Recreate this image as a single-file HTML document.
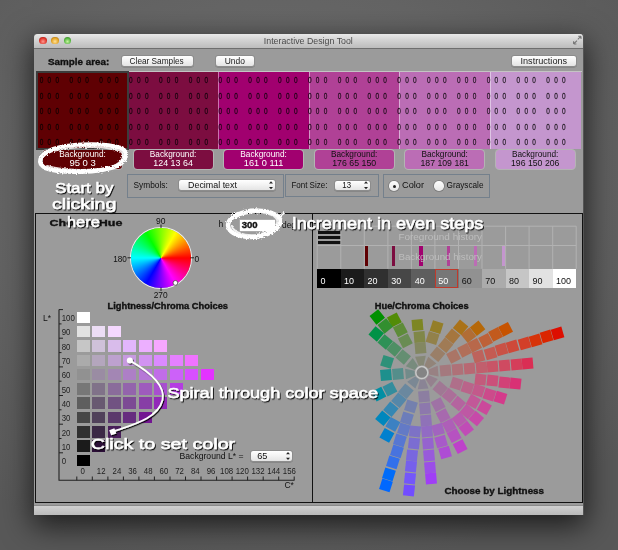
<!DOCTYPE html><html><head><meta charset="utf-8"><style>
*{margin:0;padding:0;box-sizing:border-box}
html,body{width:618px;height:550px;overflow:hidden}
body{position:relative;font-family:"Liberation Sans",sans-serif;background:#606060}
.a{position:absolute}
.btn{position:absolute;background:linear-gradient(#ffffff,#f2f2f2 50%,#e4e4e4);border:1px solid #8c8c8c;border-radius:3px;box-shadow:0 0.5px 0.5px rgba(0,0,0,0.25)}
.sq{position:absolute}
svg text{font-family:"Liberation Sans",sans-serif}
svg{will-change:transform}
</style></head><body>

<div class="a" style="left:0;top:0;width:618px;height:550px;background:radial-gradient(ellipse 75% 70% at 45% 35%,#6e6e6e 0%,#646464 55%,#585858 100%)"></div>
<div class="a" style="left:34px;top:34px;width:550px;height:481px;box-shadow:0 9px 28px 2px rgba(0,0,0,0.68)"></div>
<div class="a" style="left:34px;top:34px;width:550px;height:481px;background:#9b9b9b;border-radius:4px 4px 0 0;overflow:hidden;border-right:1px solid #555">
<div class="a" style="left:0;top:0;width:550px;height:15px;background:linear-gradient(#e8e8e8,#d0d0d0 50%,#bcbcbc);border-bottom:1px solid #6e6e6e"></div>
<div class="a" style="left:5.00px;top:2.5px;width:7.6px;height:7.6px;border-radius:50%;background:radial-gradient(circle at 50% 65%,#ff9a90 0%,#e0382e 55%,#8a1a14 100%)"></div>
<div class="a" style="left:17.45px;top:2.5px;width:7.6px;height:7.6px;border-radius:50%;background:radial-gradient(circle at 50% 65%,#ffe29a 0%,#e5a526 55%,#8a5a10 100%)"></div>
<div class="a" style="left:29.90px;top:2.5px;width:7.6px;height:7.6px;border-radius:50%;background:radial-gradient(circle at 50% 65%,#c8f5a0 0%,#58b842 55%,#2a6a1c 100%)"></div>
<div class="a" style="left:0;top:471px;width:550px;height:10px;background:linear-gradient(#d0d0d0,#bababa);border-top:1px solid #8a8a8a"></div>
</div>
<div class="btn" style="left:120.5px;top:55px;width:73.5px;height:12px"></div>
<div class="btn" style="left:214.5px;top:55px;width:40px;height:12px"></div>
<div class="btn" style="left:511px;top:55px;width:66px;height:12px"></div>
<div class="a" style="left:37px;top:70.6px;width:545px;height:1.2px;background:#c4c4c4"></div>
<div class="a" style="left:37.5px;top:71.8px;width:90.0px;height:76.8px;background:rgb(95, 0, 3)"></div>
<div class="a" style="left:127.5px;top:71.8px;width:90.5px;height:76.8px;background:rgb(124, 13, 64)"></div>
<div class="a" style="left:127.5px;top:71.8px;width:0.8px;height:76.8px;background:rgba(255,255,255,.45)"></div>
<div class="a" style="left:218px;top:71.8px;width:90.60000000000002px;height:76.8px;background:rgb(161, 0, 111)"></div>
<div class="a" style="left:218px;top:71.8px;width:0.8px;height:76.8px;background:rgba(255,255,255,.45)"></div>
<div class="a" style="left:308.6px;top:71.8px;width:90.39999999999998px;height:76.8px;background:rgb(176, 65, 150)"></div>
<div class="a" style="left:308.6px;top:71.8px;width:0.8px;height:76.8px;background:rgba(255,255,255,.45)"></div>
<div class="a" style="left:399px;top:71.8px;width:90.60000000000002px;height:76.8px;background:rgb(187, 109, 181)"></div>
<div class="a" style="left:399px;top:71.8px;width:0.8px;height:76.8px;background:rgba(255,255,255,.45)"></div>
<div class="a" style="left:489.6px;top:71.8px;width:91.60000000000002px;height:76.8px;background:rgb(196, 150, 206)"></div>
<div class="a" style="left:489.6px;top:71.8px;width:0.8px;height:76.8px;background:rgba(255,255,255,.45)"></div>
<div class="a" style="left:36px;top:70.5px;width:92.5px;height:79.2px;border:2px solid #3c3c3c"></div>
<div class="a" style="left:43.1px;top:149.8px;width:79.1px;height:19.2px;background:rgb(95, 0, 3);border-radius:3.5px;box-shadow:0 0 0 1px rgba(200,200,200,.55)"></div>
<div class="a" style="left:133.6px;top:149.8px;width:79.1px;height:19.2px;background:rgb(124, 13, 64);border-radius:3.5px;box-shadow:0 0 0 1px rgba(200,200,200,.55)"></div>
<div class="a" style="left:224.1px;top:149.8px;width:79.1px;height:19.2px;background:rgb(161, 0, 111);border-radius:3.5px;box-shadow:0 0 0 1px rgba(200,200,200,.55)"></div>
<div class="a" style="left:314.6px;top:149.8px;width:79.10000000000002px;height:19.2px;background:rgb(176, 65, 150);border-radius:3.5px;box-shadow:0 0 0 1px rgba(200,200,200,.55)"></div>
<div class="a" style="left:405.1px;top:149.8px;width:79.10000000000002px;height:19.2px;background:rgb(187, 109, 181);border-radius:3.5px;box-shadow:0 0 0 1px rgba(200,200,200,.55)"></div>
<div class="a" style="left:495.6px;top:149.8px;width:79.10000000000002px;height:19.2px;background:rgb(196, 150, 206);border-radius:3.5px;box-shadow:0 0 0 1px rgba(200,200,200,.55)"></div>
<div class="a" style="left:127px;top:173.5px;width:156.5px;height:24px;border:1px solid #74808c"></div>
<div class="btn" style="left:177.6px;top:179px;width:98px;height:12.4px"></div>
<div class="a" style="left:285.3px;top:174.3px;width:93.3px;height:22.5px;border:1px solid #74808c"></div>
<div class="btn" style="left:334px;top:179.6px;width:36.7px;height:11.8px"></div>
<div class="a" style="left:382.5px;top:174.3px;width:107.5px;height:23.5px;border:1px solid #74808c"></div>
<div class="a" style="left:389.4px;top:181.4px;width:9.6px;height:9.6px;border-radius:50%;background:linear-gradient(#fdfdfd,#e6e6e6);box-shadow:0 0 0 0.8px #7a7a7a"></div><div class="a" style="left:392.7px;top:184.7px;width:3px;height:3px;border-radius:50%;background:#222"></div>
<div class="a" style="left:434.1px;top:181.4px;width:9.6px;height:9.6px;border-radius:50%;background:linear-gradient(#fdfdfd,#e6e6e6);box-shadow:0 0 0 0.8px #7a7a7a"></div>
<div class="a" style="left:35px;top:212.5px;width:548px;height:290px;border:1.5px solid #111"></div>
<div class="a" style="left:311.5px;top:213px;width:1.5px;height:289px;background:#111"></div>
<div class="a" style="left:131.2px;top:228px;width:59.5px;height:59.5px;border-radius:50%;background:conic-gradient(from 90deg,#f00,#f0f,#00f,#0ff,#0f0,#ff0,#f00);box-shadow:0 0 0 1px #f0f0f0"></div>
<div class="a" style="left:239.8px;top:219.5px;width:35px;height:11px;background:#fff;box-shadow:0 0 0 1px #aaa"></div>
<div class="sq" style="left:76.5px;top:454.7px;width:13.2px;height:11.5px;background:rgb(0, 0, 0)"></div>
<div class="sq" style="left:76.5px;top:440.4px;width:13.2px;height:11.5px;background:rgb(27, 27, 27)"></div>
<div class="sq" style="left:92.0px;top:440.4px;width:13.2px;height:11.5px;background:rgb(43, 15, 55)"></div>
<div class="sq" style="left:76.5px;top:426.1px;width:13.2px;height:11.5px;background:rgb(48, 48, 48)"></div>
<div class="sq" style="left:92.0px;top:426.1px;width:13.2px;height:11.5px;background:rgb(59, 41, 69)"></div>
<div class="sq" style="left:107.5px;top:426.1px;width:13.2px;height:11.5px;background:rgb(72, 29, 89)"></div>
<div class="sq" style="left:76.5px;top:411.7px;width:13.2px;height:11.5px;background:rgb(71, 71, 71)"></div>
<div class="sq" style="left:92.0px;top:411.7px;width:13.2px;height:11.5px;background:rgb(80, 65, 90)"></div>
<div class="sq" style="left:107.5px;top:411.7px;width:13.2px;height:11.5px;background:rgb(91, 57, 108)"></div>
<div class="sq" style="left:123.0px;top:411.7px;width:13.2px;height:11.5px;background:rgb(102, 45, 127)"></div>
<div class="sq" style="left:138.5px;top:411.7px;width:13.2px;height:11.5px;background:rgb(115, 21, 146)"></div>
<div class="sq" style="left:76.5px;top:397.4px;width:13.2px;height:11.5px;background:rgb(94, 94, 94)"></div>
<div class="sq" style="left:92.0px;top:397.4px;width:13.2px;height:11.5px;background:rgb(104, 89, 113)"></div>
<div class="sq" style="left:107.5px;top:397.4px;width:13.2px;height:11.5px;background:rgb(113, 82, 130)"></div>
<div class="sq" style="left:123.0px;top:397.4px;width:13.2px;height:11.5px;background:rgb(124, 74, 148)"></div>
<div class="sq" style="left:138.5px;top:397.4px;width:13.2px;height:11.5px;background:rgb(135, 62, 166)"></div>
<div class="sq" style="left:154.0px;top:397.4px;width:13.2px;height:11.5px;background:rgb(146, 41, 184)"></div>
<div class="sq" style="left:76.5px;top:383.1px;width:13.2px;height:11.5px;background:rgb(119, 119, 119)"></div>
<div class="sq" style="left:92.0px;top:383.1px;width:13.2px;height:11.5px;background:rgb(128, 114, 137)"></div>
<div class="sq" style="left:107.5px;top:383.1px;width:13.2px;height:11.5px;background:rgb(138, 108, 155)"></div>
<div class="sq" style="left:123.0px;top:383.1px;width:13.2px;height:11.5px;background:rgb(147, 100, 172)"></div>
<div class="sq" style="left:138.5px;top:383.1px;width:13.2px;height:11.5px;background:rgb(158, 91, 189)"></div>
<div class="sq" style="left:154.0px;top:383.1px;width:13.2px;height:11.5px;background:rgb(168, 79, 207)"></div>
<div class="sq" style="left:169.5px;top:383.1px;width:13.2px;height:11.5px;background:rgb(180, 60, 225)"></div>
<div class="sq" style="left:76.5px;top:368.8px;width:13.2px;height:11.5px;background:rgb(145, 145, 145)"></div>
<div class="sq" style="left:92.0px;top:368.8px;width:13.2px;height:11.5px;background:rgb(154, 140, 163)"></div>
<div class="sq" style="left:107.5px;top:368.8px;width:13.2px;height:11.5px;background:rgb(163, 134, 180)"></div>
<div class="sq" style="left:123.0px;top:368.8px;width:13.2px;height:11.5px;background:rgb(173, 127, 198)"></div>
<div class="sq" style="left:138.5px;top:368.8px;width:13.2px;height:11.5px;background:rgb(182, 119, 215)"></div>
<div class="sq" style="left:154.0px;top:368.8px;width:13.2px;height:11.5px;background:rgb(193, 109, 232)"></div>
<div class="sq" style="left:169.5px;top:368.8px;width:13.2px;height:11.5px;background:rgb(204, 97, 249)"></div>
<div class="sq" style="left:185.0px;top:368.8px;width:13.2px;height:11.5px;background:rgb(215, 79, 255)"></div>
<div class="sq" style="left:200.5px;top:368.8px;width:13.2px;height:11.5px;background:rgb(227, 51, 255)"></div>
<div class="sq" style="left:76.5px;top:354.5px;width:13.2px;height:11.5px;background:rgb(171, 171, 171)"></div>
<div class="sq" style="left:92.0px;top:354.5px;width:13.2px;height:11.5px;background:rgb(180, 166, 189)"></div>
<div class="sq" style="left:107.5px;top:354.5px;width:13.2px;height:11.5px;background:rgb(189, 161, 207)"></div>
<div class="sq" style="left:123.0px;top:354.5px;width:13.2px;height:11.5px;background:rgb(199, 154, 224)"></div>
<div class="sq" style="left:138.5px;top:354.5px;width:13.2px;height:11.5px;background:rgb(209, 147, 241)"></div>
<div class="sq" style="left:154.0px;top:354.5px;width:13.2px;height:11.5px;background:rgb(219, 138, 255)"></div>
<div class="sq" style="left:169.5px;top:354.5px;width:13.2px;height:11.5px;background:rgb(229, 128, 255)"></div>
<div class="sq" style="left:185.0px;top:354.5px;width:13.2px;height:11.5px;background:rgb(240, 115, 255)"></div>
<div class="sq" style="left:76.5px;top:340.1px;width:13.2px;height:11.5px;background:rgb(198, 198, 198)"></div>
<div class="sq" style="left:92.0px;top:340.1px;width:13.2px;height:11.5px;background:rgb(207, 193, 217)"></div>
<div class="sq" style="left:107.5px;top:340.1px;width:13.2px;height:11.5px;background:rgb(217, 188, 235)"></div>
<div class="sq" style="left:123.0px;top:340.1px;width:13.2px;height:11.5px;background:rgb(226, 182, 252)"></div>
<div class="sq" style="left:138.5px;top:340.1px;width:13.2px;height:11.5px;background:rgb(236, 175, 255)"></div>
<div class="sq" style="left:154.0px;top:340.1px;width:13.2px;height:11.5px;background:rgb(246, 167, 255)"></div>
<div class="sq" style="left:76.5px;top:325.8px;width:13.2px;height:11.5px;background:rgb(226, 226, 226)"></div>
<div class="sq" style="left:92.0px;top:325.8px;width:13.2px;height:11.5px;background:rgb(236, 221, 245)"></div>
<div class="sq" style="left:107.5px;top:325.8px;width:13.2px;height:11.5px;background:rgb(245, 216, 255)"></div>
<div class="sq" style="left:76.5px;top:311.5px;width:13.2px;height:11.5px;background:rgb(255, 255, 255)"></div>
<div class="btn" style="left:249.7px;top:450.2px;width:43.3px;height:11.8px"></div>
<div class="a" style="left:317.5px;top:231px;width:23.5px;height:3px;background:#111"></div>
<div class="a" style="left:317.5px;top:236px;width:23.5px;height:3px;background:#111"></div>
<div class="a" style="left:317.5px;top:241px;width:23.5px;height:3px;background:#111"></div>
<div class="a" style="left:364.6px;top:246px;width:3.2px;height:19.5px;background:rgb(95, 0, 3)"></div>
<div class="a" style="left:392.0px;top:246px;width:3.2px;height:19.5px;background:rgb(124, 13, 64)"></div>
<div class="a" style="left:419.4px;top:246px;width:3.2px;height:19.5px;background:rgb(161, 0, 111)"></div>
<div class="a" style="left:446.8px;top:246px;width:3.2px;height:19.5px;background:rgb(176, 65, 150)"></div>
<div class="a" style="left:474.2px;top:246px;width:3.2px;height:19.5px;background:rgb(187, 109, 181)"></div>
<div class="a" style="left:501.6px;top:246px;width:3.2px;height:19.5px;background:rgb(196, 150, 206)"></div>
<div class="a" style="left:317.2px;top:268.8px;width:23.75px;height:19px;background:rgb(0,0,0)"></div>
<div class="a" style="left:340.8px;top:268.8px;width:23.75px;height:19px;background:rgb(27,27,27)"></div>
<div class="a" style="left:364.3px;top:268.8px;width:23.75px;height:19px;background:rgb(48,48,48)"></div>
<div class="a" style="left:387.9px;top:268.8px;width:23.75px;height:19px;background:rgb(71,71,71)"></div>
<div class="a" style="left:411.4px;top:268.8px;width:23.75px;height:19px;background:rgb(94,94,94)"></div>
<div class="a" style="left:434.9px;top:268.8px;width:23.75px;height:19px;background:rgb(119,119,119)"></div>
<div class="a" style="left:458.5px;top:268.8px;width:23.75px;height:19px;background:rgb(145,145,145)"></div>
<div class="a" style="left:482.0px;top:268.8px;width:23.75px;height:19px;background:rgb(171,171,171)"></div>
<div class="a" style="left:505.6px;top:268.8px;width:23.75px;height:19px;background:rgb(198,198,198)"></div>
<div class="a" style="left:529.1px;top:268.8px;width:23.75px;height:19px;background:rgb(226,226,226)"></div>
<div class="a" style="left:552.7px;top:268.8px;width:23.75px;height:19px;background:rgb(255,255,255)"></div>
<div class="a" style="left:434.9px;top:268.8px;width:23.6px;height:19px;border:1px solid #c0392b"></div>
<div class="sq" style="left:440.46px;top:365.30px;width:10.5px;height:10.5px;background:rgb(164, 121, 126);transform:rotate(-4.90deg)"></div>
<div class="sq" style="left:452.17px;top:364.30px;width:10.5px;height:10.5px;background:rgb(175, 113, 120);transform:rotate(-4.90deg)"></div>
<div class="sq" style="left:463.88px;top:363.29px;width:10.5px;height:10.5px;background:rgb(184, 104, 115);transform:rotate(-4.90deg)"></div>
<div class="sq" style="left:475.58px;top:362.29px;width:10.5px;height:10.5px;background:rgb(193, 95, 109);transform:rotate(-4.90deg)"></div>
<div class="sq" style="left:487.29px;top:361.29px;width:10.5px;height:10.5px;background:rgb(200, 85, 103);transform:rotate(-4.90deg)"></div>
<div class="sq" style="left:499.00px;top:360.28px;width:10.5px;height:10.5px;background:rgb(207, 74, 97);transform:rotate(-4.90deg)"></div>
<div class="sq" style="left:510.70px;top:359.28px;width:10.5px;height:10.5px;background:rgb(213, 62, 90);transform:rotate(-4.90deg)"></div>
<div class="sq" style="left:522.41px;top:358.27px;width:10.5px;height:10.5px;background:rgb(218, 46, 84);transform:rotate(-4.90deg)"></div>
<div class="sq" style="left:473.46px;top:350.87px;width:10.5px;height:10.5px;background:rgb(189, 99, 92);transform:rotate(-16.15deg)"></div>
<div class="sq" style="left:484.75px;top:347.60px;width:10.5px;height:10.5px;background:rgb(196, 91, 82);transform:rotate(-16.15deg)"></div>
<div class="sq" style="left:496.03px;top:344.33px;width:10.5px;height:10.5px;background:rgb(201, 82, 70);transform:rotate(-16.15deg)"></div>
<div class="sq" style="left:507.32px;top:341.06px;width:10.5px;height:10.5px;background:rgb(206, 73, 57);transform:rotate(-16.15deg)"></div>
<div class="sq" style="left:518.61px;top:337.80px;width:10.5px;height:10.5px;background:rgb(211, 63, 40);transform:rotate(-16.15deg)"></div>
<div class="sq" style="left:529.89px;top:334.53px;width:10.5px;height:10.5px;background:rgb(215, 51, 9);transform:rotate(-16.15deg)"></div>
<div class="sq" style="left:541.18px;top:331.26px;width:10.5px;height:10.5px;background:rgb(218, 37, 0);transform:rotate(-16.15deg)"></div>
<div class="sq" style="left:552.47px;top:327.99px;width:10.5px;height:10.5px;background:rgb(221, 14, 0);transform:rotate(-16.15deg)"></div>
<div class="sq" style="left:448.29px;top:350.90px;width:10.5px;height:10.5px;background:rgb(170, 117, 102);transform:rotate(-27.40deg)"></div>
<div class="sq" style="left:458.72px;top:345.49px;width:10.5px;height:10.5px;background:rgb(177, 111, 89);transform:rotate(-27.40deg)"></div>
<div class="sq" style="left:469.15px;top:340.08px;width:10.5px;height:10.5px;background:rgb(184, 104, 74);transform:rotate(-27.40deg)"></div>
<div class="sq" style="left:479.58px;top:334.68px;width:10.5px;height:10.5px;background:rgb(190, 97, 56);transform:rotate(-27.40deg)"></div>
<div class="sq" style="left:490.02px;top:329.27px;width:10.5px;height:10.5px;background:rgb(194, 90, 29);transform:rotate(-27.40deg)"></div>
<div class="sq" style="left:500.45px;top:323.86px;width:10.5px;height:10.5px;background:rgb(199, 83, 0);transform:rotate(-27.40deg)"></div>
<div class="sq" style="left:462.82px;top:330.34px;width:10.5px;height:10.5px;background:rgb(177, 109, 53);transform:rotate(-38.65deg)"></div>
<div class="sq" style="left:472.00px;top:323.01px;width:10.5px;height:10.5px;background:rgb(182, 104, 8);transform:rotate(-38.65deg)"></div>
<div class="sq" style="left:432.01px;top:348.99px;width:10.5px;height:10.5px;background:rgb(154, 127, 104);transform:rotate(-49.90deg)"></div>
<div class="sq" style="left:439.58px;top:340.00px;width:10.5px;height:10.5px;background:rgb(160, 123, 85);transform:rotate(-49.90deg)"></div>
<div class="sq" style="left:447.15px;top:331.02px;width:10.5px;height:10.5px;background:rgb(165, 118, 62);transform:rotate(-49.90deg)"></div>
<div class="sq" style="left:454.71px;top:322.03px;width:10.5px;height:10.5px;background:rgb(170, 114, 24);transform:rotate(-49.90deg)"></div>
<div class="sq" style="left:427.36px;top:333.27px;width:10.5px;height:10.5px;background:rgb(146, 129, 74);transform:rotate(-72.40deg)"></div>
<div class="sq" style="left:430.91px;top:322.07px;width:10.5px;height:10.5px;background:rgb(148, 126, 39);transform:rotate(-72.40deg)"></div>
<div class="sq" style="left:414.50px;top:343.44px;width:10.5px;height:10.5px;background:rgb(131, 135, 97);transform:rotate(-94.90deg)"></div>
<div class="sq" style="left:413.50px;top:331.73px;width:10.5px;height:10.5px;background:rgb(128, 135, 72);transform:rotate(-94.90deg)"></div>
<div class="sq" style="left:412.49px;top:320.02px;width:10.5px;height:10.5px;background:rgb(125, 134, 35);transform:rotate(-94.90deg)"></div>
<div class="sq" style="left:400.10px;top:335.61px;width:10.5px;height:10.5px;background:rgb(105, 140, 83);transform:rotate(-117.40deg)"></div>
<div class="sq" style="left:394.69px;top:325.18px;width:10.5px;height:10.5px;background:rgb(94, 140, 57);transform:rotate(-117.40deg)"></div>
<div class="sq" style="left:389.28px;top:314.75px;width:10.5px;height:10.5px;background:rgb(82, 140, 7);transform:rotate(-117.40deg)"></div>
<div class="sq" style="left:379.54px;top:321.08px;width:10.5px;height:10.5px;background:rgb(50, 143, 47);transform:rotate(-128.65deg)"></div>
<div class="sq" style="left:372.21px;top:311.90px;width:10.5px;height:10.5px;background:rgb(1, 144, 0);transform:rotate(-128.65deg)"></div>
<div class="sq" style="left:398.19px;top:351.89px;width:10.5px;height:10.5px;background:rgb(100, 142, 113);transform:rotate(-139.90deg)"></div>
<div class="sq" style="left:389.20px;top:344.32px;width:10.5px;height:10.5px;background:rgb(78, 143, 100);transform:rotate(-139.90deg)"></div>
<div class="sq" style="left:380.22px;top:336.75px;width:10.5px;height:10.5px;background:rgb(46, 145, 86);transform:rotate(-139.90deg)"></div>
<div class="sq" style="left:371.23px;top:329.19px;width:10.5px;height:10.5px;background:rgb(0, 146, 71);transform:rotate(-139.90deg)"></div>
<div class="sq" style="left:382.47px;top:356.54px;width:10.5px;height:10.5px;background:rgb(47, 145, 121);transform:rotate(-162.40deg)"></div>
<div class="sq" style="left:392.64px;top:369.40px;width:10.5px;height:10.5px;background:rgb(84, 142, 139);transform:rotate(-184.90deg)"></div>
<div class="sq" style="left:380.93px;top:370.40px;width:10.5px;height:10.5px;background:rgb(29, 144, 141);transform:rotate(-184.90deg)"></div>
<div class="sq" style="left:384.81px;top:383.80px;width:10.5px;height:10.5px;background:rgb(51, 141, 157);transform:rotate(-207.40deg)"></div>
<div class="sq" style="left:374.38px;top:389.21px;width:10.5px;height:10.5px;background:rgb(0, 143, 164);transform:rotate(-207.40deg)"></div>
<div class="sq" style="left:401.09px;top:385.71px;width:10.5px;height:10.5px;background:rgb(106, 136, 159);transform:rotate(-229.90deg)"></div>
<div class="sq" style="left:393.52px;top:394.70px;width:10.5px;height:10.5px;background:rgb(85, 135, 169);transform:rotate(-229.90deg)"></div>
<div class="sq" style="left:385.95px;top:403.68px;width:10.5px;height:10.5px;background:rgb(53, 135, 179);transform:rotate(-229.90deg)"></div>
<div class="sq" style="left:378.39px;top:412.67px;width:10.5px;height:10.5px;background:rgb(0, 135, 189);transform:rotate(-229.90deg)"></div>
<div class="sq" style="left:387.96px;top:419.25px;width:10.5px;height:10.5px;background:rgb(60, 129, 194);transform:rotate(-241.15deg)"></div>
<div class="sq" style="left:382.29px;top:429.54px;width:10.5px;height:10.5px;background:rgb(0, 128, 206);transform:rotate(-241.15deg)"></div>
<div class="sq" style="left:405.74px;top:401.43px;width:10.5px;height:10.5px;background:rgb(116, 128, 174);transform:rotate(-252.40deg)"></div>
<div class="sq" style="left:402.19px;top:412.63px;width:10.5px;height:10.5px;background:rgb(108, 125, 186);transform:rotate(-252.40deg)"></div>
<div class="sq" style="left:398.63px;top:423.83px;width:10.5px;height:10.5px;background:rgb(99, 122, 198);transform:rotate(-252.40deg)"></div>
<div class="sq" style="left:395.08px;top:435.03px;width:10.5px;height:10.5px;background:rgb(87, 119, 210);transform:rotate(-252.40deg)"></div>
<div class="sq" style="left:391.53px;top:446.23px;width:10.5px;height:10.5px;background:rgb(72, 115, 222);transform:rotate(-252.40deg)"></div>
<div class="sq" style="left:387.98px;top:457.43px;width:10.5px;height:10.5px;background:rgb(50, 112, 235);transform:rotate(-252.40deg)"></div>
<div class="sq" style="left:384.42px;top:468.63px;width:10.5px;height:10.5px;background:rgb(0, 108, 249);transform:rotate(-252.40deg)"></div>
<div class="sq" style="left:380.87px;top:479.83px;width:10.5px;height:10.5px;background:rgb(0, 104, 255);transform:rotate(-252.40deg)"></div>
<div class="sq" style="left:410.00px;top:426.24px;width:10.5px;height:10.5px;background:rgb(125, 114, 198);transform:rotate(-263.65deg)"></div>
<div class="sq" style="left:408.70px;top:437.91px;width:10.5px;height:10.5px;background:rgb(123, 109, 210);transform:rotate(-263.65deg)"></div>
<div class="sq" style="left:407.40px;top:449.59px;width:10.5px;height:10.5px;background:rgb(121, 103, 223);transform:rotate(-263.65deg)"></div>
<div class="sq" style="left:406.10px;top:461.27px;width:10.5px;height:10.5px;background:rgb(118, 96, 236);transform:rotate(-263.65deg)"></div>
<div class="sq" style="left:404.80px;top:472.95px;width:10.5px;height:10.5px;background:rgb(116, 87, 250);transform:rotate(-263.65deg)"></div>
<div class="sq" style="left:403.50px;top:484.63px;width:10.5px;height:10.5px;background:rgb(114, 77, 255);transform:rotate(-263.65deg)"></div>
<div class="sq" style="left:418.60px;top:391.26px;width:10.5px;height:10.5px;background:rgb(140, 126, 161);transform:rotate(-274.90deg)"></div>
<div class="sq" style="left:419.60px;top:402.97px;width:10.5px;height:10.5px;background:rgb(141, 120, 173);transform:rotate(-274.90deg)"></div>
<div class="sq" style="left:420.61px;top:414.68px;width:10.5px;height:10.5px;background:rgb(143, 114, 184);transform:rotate(-274.90deg)"></div>
<div class="sq" style="left:421.61px;top:426.38px;width:10.5px;height:10.5px;background:rgb(146, 107, 196);transform:rotate(-274.90deg)"></div>
<div class="sq" style="left:422.61px;top:438.09px;width:10.5px;height:10.5px;background:rgb(149, 99, 207);transform:rotate(-274.90deg)"></div>
<div class="sq" style="left:423.62px;top:449.80px;width:10.5px;height:10.5px;background:rgb(152, 90, 219);transform:rotate(-274.90deg)"></div>
<div class="sq" style="left:424.62px;top:461.50px;width:10.5px;height:10.5px;background:rgb(155, 78, 232);transform:rotate(-274.90deg)"></div>
<div class="sq" style="left:425.63px;top:473.21px;width:10.5px;height:10.5px;background:rgb(160, 62, 246);transform:rotate(-274.90deg)"></div>
<div class="sq" style="left:433.03px;top:424.26px;width:10.5px;height:10.5px;background:rgb(162, 100, 191);transform:rotate(-286.15deg)"></div>
<div class="sq" style="left:436.30px;top:435.55px;width:10.5px;height:10.5px;background:rgb(168, 90, 201);transform:rotate(-286.15deg)"></div>
<div class="sq" style="left:439.57px;top:446.83px;width:10.5px;height:10.5px;background:rgb(174, 76, 212);transform:rotate(-286.15deg)"></div>
<div class="sq" style="left:433.00px;top:399.09px;width:10.5px;height:10.5px;background:rgb(159, 114, 165);transform:rotate(-297.40deg)"></div>
<div class="sq" style="left:438.41px;top:409.52px;width:10.5px;height:10.5px;background:rgb(167, 105, 174);transform:rotate(-297.40deg)"></div>
<div class="sq" style="left:443.82px;top:419.95px;width:10.5px;height:10.5px;background:rgb(174, 95, 184);transform:rotate(-297.40deg)"></div>
<div class="sq" style="left:449.22px;top:430.38px;width:10.5px;height:10.5px;background:rgb(182, 82, 193);transform:rotate(-297.40deg)"></div>
<div class="sq" style="left:454.63px;top:440.82px;width:10.5px;height:10.5px;background:rgb(190, 65, 202);transform:rotate(-297.40deg)"></div>
<div class="sq" style="left:453.56px;top:413.62px;width:10.5px;height:10.5px;background:rgb(184, 90, 175);transform:rotate(-308.65deg)"></div>
<div class="sq" style="left:460.89px;top:422.80px;width:10.5px;height:10.5px;background:rgb(192, 76, 182);transform:rotate(-308.65deg)"></div>
<div class="sq" style="left:434.91px;top:382.81px;width:10.5px;height:10.5px;background:rgb(160, 120, 148);transform:rotate(-319.90deg)"></div>
<div class="sq" style="left:443.90px;top:390.38px;width:10.5px;height:10.5px;background:rgb(171, 111, 153);transform:rotate(-319.90deg)"></div>
<div class="sq" style="left:452.88px;top:397.95px;width:10.5px;height:10.5px;background:rgb(180, 100, 159);transform:rotate(-319.90deg)"></div>
<div class="sq" style="left:461.87px;top:405.51px;width:10.5px;height:10.5px;background:rgb(190, 88, 164);transform:rotate(-319.90deg)"></div>
<div class="sq" style="left:470.86px;top:413.08px;width:10.5px;height:10.5px;background:rgb(199, 73, 169);transform:rotate(-319.90deg)"></div>
<div class="sq" style="left:468.45px;top:395.94px;width:10.5px;height:10.5px;background:rgb(194, 88, 152);transform:rotate(-331.15deg)"></div>
<div class="sq" style="left:478.74px;top:401.61px;width:10.5px;height:10.5px;background:rgb(203, 73, 155);transform:rotate(-331.15deg)"></div>
<div class="sq" style="left:450.63px;top:378.16px;width:10.5px;height:10.5px;background:rgb(175, 111, 138);transform:rotate(-342.40deg)"></div>
<div class="sq" style="left:461.83px;top:381.71px;width:10.5px;height:10.5px;background:rgb(186, 100, 138);transform:rotate(-342.40deg)"></div>
<div class="sq" style="left:473.03px;top:385.27px;width:10.5px;height:10.5px;background:rgb(195, 89, 139);transform:rotate(-342.40deg)"></div>
<div class="sq" style="left:484.23px;top:388.82px;width:10.5px;height:10.5px;background:rgb(204, 75, 139);transform:rotate(-342.40deg)"></div>
<div class="sq" style="left:495.43px;top:392.37px;width:10.5px;height:10.5px;background:rgb(212, 59, 139);transform:rotate(-342.40deg)"></div>
<div class="sq" style="left:475.44px;top:373.90px;width:10.5px;height:10.5px;background:rgb(195, 91, 124);transform:rotate(-353.65deg)"></div>
<div class="sq" style="left:487.11px;top:375.20px;width:10.5px;height:10.5px;background:rgb(203, 80, 122);transform:rotate(-353.65deg)"></div>
<div class="sq" style="left:498.79px;top:376.50px;width:10.5px;height:10.5px;background:rgb(210, 66, 119);transform:rotate(-353.65deg)"></div>
<div class="sq" style="left:510.47px;top:377.80px;width:10.5px;height:10.5px;background:rgb(217, 49, 117);transform:rotate(-353.65deg)"></div>
<svg class="a" style="left:0;top:0" width="618" height="550" viewBox="0 0 618 550"><polygon points="425.65,379.16 430.85,387.22 437.75,379.03 428.91,375.27" fill="rgb(149, 129, 142)"/>
<polygon points="419.88,379.95 417.86,389.34 428.53,388.43 424.94,379.52" fill="rgb(138, 132, 149)"/>
<polygon points="415.24,376.45 407.18,381.65 415.37,388.55 419.13,379.71" fill="rgb(123, 136, 148)"/>
<polygon points="414.45,370.68 405.06,368.66 405.97,379.33 414.88,375.74" fill="rgb(114, 139, 138)"/>
<polygon points="417.95,366.04 412.75,357.98 405.85,366.17 414.69,369.93" fill="rgb(120, 139, 125)"/>
<polygon points="423.72,365.25 425.74,355.86 415.07,356.77 418.66,365.68" fill="rgb(134, 136, 118)"/>
<polygon points="428.36,368.75 436.42,363.55 428.23,356.65 424.47,365.49" fill="rgb(146, 132, 121)"/>
<polygon points="429.15,374.52 438.54,376.54 437.63,365.87 428.72,369.46" fill="rgb(152, 129, 131)"/>
<path d="M573.6,44 L577,40.6 M573.6,44 V41.2 M573.6,44 H576.4 M581,36.2 L577.8,39.4 M581,36.2 V39 M581,36.2 H578.2" stroke="#777" stroke-width="1.1" fill="none"/>
<text x="263.8" y="44.3" font-size="9.5" fill="#4a4a4a" textLength="89.0" lengthAdjust="spacingAndGlyphs">Interactive Design Tool</text>
<text x="48.0" y="64.6" font-size="9.9" font-weight="bold" stroke="#111" stroke-width="0.35" fill="#111" textLength="61.3" lengthAdjust="spacingAndGlyphs">Sample area:</text>
<text x="129.6" y="63.8" font-size="8.6" fill="#1a1a1a" textLength="54.1" lengthAdjust="spacingAndGlyphs">Clear Samples</text>
<text x="224.7" y="63.8" font-size="8.6" fill="#1a1a1a" textLength="20.2" lengthAdjust="spacingAndGlyphs">Undo</text>
<text x="520.5" y="63.6" font-size="8.6" fill="#1a1a1a" textLength="46.6" lengthAdjust="spacingAndGlyphs">Instructions</text>
<text x="39.7" y="83.2" font-size="8.8" fill="#000" textLength="3.6" lengthAdjust="spacingAndGlyphs" stroke="#000" stroke-width="0.3" opacity="0.8">0</text>
<text x="47.6" y="83.2" font-size="8.8" fill="#000" textLength="3.6" lengthAdjust="spacingAndGlyphs" stroke="#000" stroke-width="0.3" opacity="0.8">0</text>
<text x="55.5" y="83.2" font-size="8.8" fill="#000" textLength="3.6" lengthAdjust="spacingAndGlyphs" stroke="#000" stroke-width="0.3" opacity="0.8">0</text>
<text x="69.5" y="83.2" font-size="8.8" fill="#000" textLength="3.6" lengthAdjust="spacingAndGlyphs" stroke="#000" stroke-width="0.3" opacity="0.8">0</text>
<text x="77.4" y="83.2" font-size="8.8" fill="#000" textLength="3.6" lengthAdjust="spacingAndGlyphs" stroke="#000" stroke-width="0.3" opacity="0.8">0</text>
<text x="85.3" y="83.2" font-size="8.8" fill="#000" textLength="3.6" lengthAdjust="spacingAndGlyphs" stroke="#000" stroke-width="0.3" opacity="0.8">0</text>
<text x="99.3" y="83.2" font-size="8.8" fill="#000" textLength="3.6" lengthAdjust="spacingAndGlyphs" stroke="#000" stroke-width="0.3" opacity="0.8">0</text>
<text x="107.2" y="83.2" font-size="8.8" fill="#000" textLength="3.6" lengthAdjust="spacingAndGlyphs" stroke="#000" stroke-width="0.3" opacity="0.8">0</text>
<text x="115.1" y="83.2" font-size="8.8" fill="#000" textLength="3.6" lengthAdjust="spacingAndGlyphs" stroke="#000" stroke-width="0.3" opacity="0.8">0</text>
<text x="129.1" y="83.2" font-size="8.8" fill="#000" textLength="3.6" lengthAdjust="spacingAndGlyphs" stroke="#000" stroke-width="0.3" opacity="0.8">0</text>
<text x="137.0" y="83.2" font-size="8.8" fill="#000" textLength="3.6" lengthAdjust="spacingAndGlyphs" stroke="#000" stroke-width="0.3" opacity="0.8">0</text>
<text x="144.9" y="83.2" font-size="8.8" fill="#000" textLength="3.6" lengthAdjust="spacingAndGlyphs" stroke="#000" stroke-width="0.3" opacity="0.8">0</text>
<text x="158.9" y="83.2" font-size="8.8" fill="#000" textLength="3.6" lengthAdjust="spacingAndGlyphs" stroke="#000" stroke-width="0.3" opacity="0.8">0</text>
<text x="166.8" y="83.2" font-size="8.8" fill="#000" textLength="3.6" lengthAdjust="spacingAndGlyphs" stroke="#000" stroke-width="0.3" opacity="0.8">0</text>
<text x="174.7" y="83.2" font-size="8.8" fill="#000" textLength="3.6" lengthAdjust="spacingAndGlyphs" stroke="#000" stroke-width="0.3" opacity="0.8">0</text>
<text x="188.7" y="83.2" font-size="8.8" fill="#000" textLength="3.6" lengthAdjust="spacingAndGlyphs" stroke="#000" stroke-width="0.3" opacity="0.8">0</text>
<text x="196.6" y="83.2" font-size="8.8" fill="#000" textLength="3.6" lengthAdjust="spacingAndGlyphs" stroke="#000" stroke-width="0.3" opacity="0.8">0</text>
<text x="204.5" y="83.2" font-size="8.8" fill="#000" textLength="3.6" lengthAdjust="spacingAndGlyphs" stroke="#000" stroke-width="0.3" opacity="0.8">0</text>
<text x="218.5" y="83.2" font-size="8.8" fill="#000" textLength="3.6" lengthAdjust="spacingAndGlyphs" stroke="#000" stroke-width="0.3" opacity="0.8">0</text>
<text x="226.4" y="83.2" font-size="8.8" fill="#000" textLength="3.6" lengthAdjust="spacingAndGlyphs" stroke="#000" stroke-width="0.3" opacity="0.8">0</text>
<text x="234.3" y="83.2" font-size="8.8" fill="#000" textLength="3.6" lengthAdjust="spacingAndGlyphs" stroke="#000" stroke-width="0.3" opacity="0.8">0</text>
<text x="248.3" y="83.2" font-size="8.8" fill="#000" textLength="3.6" lengthAdjust="spacingAndGlyphs" stroke="#000" stroke-width="0.3" opacity="0.8">0</text>
<text x="256.2" y="83.2" font-size="8.8" fill="#000" textLength="3.6" lengthAdjust="spacingAndGlyphs" stroke="#000" stroke-width="0.3" opacity="0.8">0</text>
<text x="264.1" y="83.2" font-size="8.8" fill="#000" textLength="3.6" lengthAdjust="spacingAndGlyphs" stroke="#000" stroke-width="0.3" opacity="0.8">0</text>
<text x="278.1" y="83.2" font-size="8.8" fill="#000" textLength="3.6" lengthAdjust="spacingAndGlyphs" stroke="#000" stroke-width="0.3" opacity="0.8">0</text>
<text x="286.0" y="83.2" font-size="8.8" fill="#000" textLength="3.6" lengthAdjust="spacingAndGlyphs" stroke="#000" stroke-width="0.3" opacity="0.8">0</text>
<text x="293.9" y="83.2" font-size="8.8" fill="#000" textLength="3.6" lengthAdjust="spacingAndGlyphs" stroke="#000" stroke-width="0.3" opacity="0.8">0</text>
<text x="307.9" y="83.2" font-size="8.8" fill="#000" textLength="3.6" lengthAdjust="spacingAndGlyphs" stroke="#000" stroke-width="0.3" opacity="0.8">0</text>
<text x="315.8" y="83.2" font-size="8.8" fill="#000" textLength="3.6" lengthAdjust="spacingAndGlyphs" stroke="#000" stroke-width="0.3" opacity="0.8">0</text>
<text x="323.7" y="83.2" font-size="8.8" fill="#000" textLength="3.6" lengthAdjust="spacingAndGlyphs" stroke="#000" stroke-width="0.3" opacity="0.8">0</text>
<text x="337.7" y="83.2" font-size="8.8" fill="#000" textLength="3.6" lengthAdjust="spacingAndGlyphs" stroke="#000" stroke-width="0.3" opacity="0.8">0</text>
<text x="345.6" y="83.2" font-size="8.8" fill="#000" textLength="3.6" lengthAdjust="spacingAndGlyphs" stroke="#000" stroke-width="0.3" opacity="0.8">0</text>
<text x="353.5" y="83.2" font-size="8.8" fill="#000" textLength="3.6" lengthAdjust="spacingAndGlyphs" stroke="#000" stroke-width="0.3" opacity="0.8">0</text>
<text x="367.5" y="83.2" font-size="8.8" fill="#000" textLength="3.6" lengthAdjust="spacingAndGlyphs" stroke="#000" stroke-width="0.3" opacity="0.8">0</text>
<text x="375.4" y="83.2" font-size="8.8" fill="#000" textLength="3.6" lengthAdjust="spacingAndGlyphs" stroke="#000" stroke-width="0.3" opacity="0.8">0</text>
<text x="383.3" y="83.2" font-size="8.8" fill="#000" textLength="3.6" lengthAdjust="spacingAndGlyphs" stroke="#000" stroke-width="0.3" opacity="0.8">0</text>
<text x="397.3" y="83.2" font-size="8.8" fill="#000" textLength="3.6" lengthAdjust="spacingAndGlyphs" stroke="#000" stroke-width="0.3" opacity="0.8">0</text>
<text x="405.2" y="83.2" font-size="8.8" fill="#000" textLength="3.6" lengthAdjust="spacingAndGlyphs" stroke="#000" stroke-width="0.3" opacity="0.8">0</text>
<text x="413.1" y="83.2" font-size="8.8" fill="#000" textLength="3.6" lengthAdjust="spacingAndGlyphs" stroke="#000" stroke-width="0.3" opacity="0.8">0</text>
<text x="427.1" y="83.2" font-size="8.8" fill="#000" textLength="3.6" lengthAdjust="spacingAndGlyphs" stroke="#000" stroke-width="0.3" opacity="0.8">0</text>
<text x="435.0" y="83.2" font-size="8.8" fill="#000" textLength="3.6" lengthAdjust="spacingAndGlyphs" stroke="#000" stroke-width="0.3" opacity="0.8">0</text>
<text x="442.9" y="83.2" font-size="8.8" fill="#000" textLength="3.6" lengthAdjust="spacingAndGlyphs" stroke="#000" stroke-width="0.3" opacity="0.8">0</text>
<text x="456.9" y="83.2" font-size="8.8" fill="#000" textLength="3.6" lengthAdjust="spacingAndGlyphs" stroke="#000" stroke-width="0.3" opacity="0.8">0</text>
<text x="464.8" y="83.2" font-size="8.8" fill="#000" textLength="3.6" lengthAdjust="spacingAndGlyphs" stroke="#000" stroke-width="0.3" opacity="0.8">0</text>
<text x="472.7" y="83.2" font-size="8.8" fill="#000" textLength="3.6" lengthAdjust="spacingAndGlyphs" stroke="#000" stroke-width="0.3" opacity="0.8">0</text>
<text x="486.7" y="83.2" font-size="8.8" fill="#000" textLength="3.6" lengthAdjust="spacingAndGlyphs" stroke="#000" stroke-width="0.3" opacity="0.8">0</text>
<text x="494.6" y="83.2" font-size="8.8" fill="#000" textLength="3.6" lengthAdjust="spacingAndGlyphs" stroke="#000" stroke-width="0.3" opacity="0.8">0</text>
<text x="502.5" y="83.2" font-size="8.8" fill="#000" textLength="3.6" lengthAdjust="spacingAndGlyphs" stroke="#000" stroke-width="0.3" opacity="0.8">0</text>
<text x="516.5" y="83.2" font-size="8.8" fill="#000" textLength="3.6" lengthAdjust="spacingAndGlyphs" stroke="#000" stroke-width="0.3" opacity="0.8">0</text>
<text x="524.4" y="83.2" font-size="8.8" fill="#000" textLength="3.6" lengthAdjust="spacingAndGlyphs" stroke="#000" stroke-width="0.3" opacity="0.8">0</text>
<text x="532.3" y="83.2" font-size="8.8" fill="#000" textLength="3.6" lengthAdjust="spacingAndGlyphs" stroke="#000" stroke-width="0.3" opacity="0.8">0</text>
<text x="546.3" y="83.2" font-size="8.8" fill="#000" textLength="3.6" lengthAdjust="spacingAndGlyphs" stroke="#000" stroke-width="0.3" opacity="0.8">0</text>
<text x="554.2" y="83.2" font-size="8.8" fill="#000" textLength="3.6" lengthAdjust="spacingAndGlyphs" stroke="#000" stroke-width="0.3" opacity="0.8">0</text>
<text x="562.1" y="83.2" font-size="8.8" fill="#000" textLength="3.6" lengthAdjust="spacingAndGlyphs" stroke="#000" stroke-width="0.3" opacity="0.8">0</text>
<text x="39.7" y="98.7" font-size="8.8" fill="#000" textLength="3.6" lengthAdjust="spacingAndGlyphs" stroke="#000" stroke-width="0.3" opacity="0.8">0</text>
<text x="47.6" y="98.7" font-size="8.8" fill="#000" textLength="3.6" lengthAdjust="spacingAndGlyphs" stroke="#000" stroke-width="0.3" opacity="0.8">0</text>
<text x="55.5" y="98.7" font-size="8.8" fill="#000" textLength="3.6" lengthAdjust="spacingAndGlyphs" stroke="#000" stroke-width="0.3" opacity="0.8">0</text>
<text x="69.5" y="98.7" font-size="8.8" fill="#000" textLength="3.6" lengthAdjust="spacingAndGlyphs" stroke="#000" stroke-width="0.3" opacity="0.8">0</text>
<text x="77.4" y="98.7" font-size="8.8" fill="#000" textLength="3.6" lengthAdjust="spacingAndGlyphs" stroke="#000" stroke-width="0.3" opacity="0.8">0</text>
<text x="85.3" y="98.7" font-size="8.8" fill="#000" textLength="3.6" lengthAdjust="spacingAndGlyphs" stroke="#000" stroke-width="0.3" opacity="0.8">0</text>
<text x="99.3" y="98.7" font-size="8.8" fill="#000" textLength="3.6" lengthAdjust="spacingAndGlyphs" stroke="#000" stroke-width="0.3" opacity="0.8">0</text>
<text x="107.2" y="98.7" font-size="8.8" fill="#000" textLength="3.6" lengthAdjust="spacingAndGlyphs" stroke="#000" stroke-width="0.3" opacity="0.8">0</text>
<text x="115.1" y="98.7" font-size="8.8" fill="#000" textLength="3.6" lengthAdjust="spacingAndGlyphs" stroke="#000" stroke-width="0.3" opacity="0.8">0</text>
<text x="129.1" y="98.7" font-size="8.8" fill="#000" textLength="3.6" lengthAdjust="spacingAndGlyphs" stroke="#000" stroke-width="0.3" opacity="0.8">0</text>
<text x="137.0" y="98.7" font-size="8.8" fill="#000" textLength="3.6" lengthAdjust="spacingAndGlyphs" stroke="#000" stroke-width="0.3" opacity="0.8">0</text>
<text x="144.9" y="98.7" font-size="8.8" fill="#000" textLength="3.6" lengthAdjust="spacingAndGlyphs" stroke="#000" stroke-width="0.3" opacity="0.8">0</text>
<text x="158.9" y="98.7" font-size="8.8" fill="#000" textLength="3.6" lengthAdjust="spacingAndGlyphs" stroke="#000" stroke-width="0.3" opacity="0.8">0</text>
<text x="166.8" y="98.7" font-size="8.8" fill="#000" textLength="3.6" lengthAdjust="spacingAndGlyphs" stroke="#000" stroke-width="0.3" opacity="0.8">0</text>
<text x="174.7" y="98.7" font-size="8.8" fill="#000" textLength="3.6" lengthAdjust="spacingAndGlyphs" stroke="#000" stroke-width="0.3" opacity="0.8">0</text>
<text x="188.7" y="98.7" font-size="8.8" fill="#000" textLength="3.6" lengthAdjust="spacingAndGlyphs" stroke="#000" stroke-width="0.3" opacity="0.8">0</text>
<text x="196.6" y="98.7" font-size="8.8" fill="#000" textLength="3.6" lengthAdjust="spacingAndGlyphs" stroke="#000" stroke-width="0.3" opacity="0.8">0</text>
<text x="204.5" y="98.7" font-size="8.8" fill="#000" textLength="3.6" lengthAdjust="spacingAndGlyphs" stroke="#000" stroke-width="0.3" opacity="0.8">0</text>
<text x="218.5" y="98.7" font-size="8.8" fill="#000" textLength="3.6" lengthAdjust="spacingAndGlyphs" stroke="#000" stroke-width="0.3" opacity="0.8">0</text>
<text x="226.4" y="98.7" font-size="8.8" fill="#000" textLength="3.6" lengthAdjust="spacingAndGlyphs" stroke="#000" stroke-width="0.3" opacity="0.8">0</text>
<text x="234.3" y="98.7" font-size="8.8" fill="#000" textLength="3.6" lengthAdjust="spacingAndGlyphs" stroke="#000" stroke-width="0.3" opacity="0.8">0</text>
<text x="248.3" y="98.7" font-size="8.8" fill="#000" textLength="3.6" lengthAdjust="spacingAndGlyphs" stroke="#000" stroke-width="0.3" opacity="0.8">0</text>
<text x="256.2" y="98.7" font-size="8.8" fill="#000" textLength="3.6" lengthAdjust="spacingAndGlyphs" stroke="#000" stroke-width="0.3" opacity="0.8">0</text>
<text x="264.1" y="98.7" font-size="8.8" fill="#000" textLength="3.6" lengthAdjust="spacingAndGlyphs" stroke="#000" stroke-width="0.3" opacity="0.8">0</text>
<text x="278.1" y="98.7" font-size="8.8" fill="#000" textLength="3.6" lengthAdjust="spacingAndGlyphs" stroke="#000" stroke-width="0.3" opacity="0.8">0</text>
<text x="286.0" y="98.7" font-size="8.8" fill="#000" textLength="3.6" lengthAdjust="spacingAndGlyphs" stroke="#000" stroke-width="0.3" opacity="0.8">0</text>
<text x="293.9" y="98.7" font-size="8.8" fill="#000" textLength="3.6" lengthAdjust="spacingAndGlyphs" stroke="#000" stroke-width="0.3" opacity="0.8">0</text>
<text x="307.9" y="98.7" font-size="8.8" fill="#000" textLength="3.6" lengthAdjust="spacingAndGlyphs" stroke="#000" stroke-width="0.3" opacity="0.8">0</text>
<text x="315.8" y="98.7" font-size="8.8" fill="#000" textLength="3.6" lengthAdjust="spacingAndGlyphs" stroke="#000" stroke-width="0.3" opacity="0.8">0</text>
<text x="323.7" y="98.7" font-size="8.8" fill="#000" textLength="3.6" lengthAdjust="spacingAndGlyphs" stroke="#000" stroke-width="0.3" opacity="0.8">0</text>
<text x="337.7" y="98.7" font-size="8.8" fill="#000" textLength="3.6" lengthAdjust="spacingAndGlyphs" stroke="#000" stroke-width="0.3" opacity="0.8">0</text>
<text x="345.6" y="98.7" font-size="8.8" fill="#000" textLength="3.6" lengthAdjust="spacingAndGlyphs" stroke="#000" stroke-width="0.3" opacity="0.8">0</text>
<text x="353.5" y="98.7" font-size="8.8" fill="#000" textLength="3.6" lengthAdjust="spacingAndGlyphs" stroke="#000" stroke-width="0.3" opacity="0.8">0</text>
<text x="367.5" y="98.7" font-size="8.8" fill="#000" textLength="3.6" lengthAdjust="spacingAndGlyphs" stroke="#000" stroke-width="0.3" opacity="0.8">0</text>
<text x="375.4" y="98.7" font-size="8.8" fill="#000" textLength="3.6" lengthAdjust="spacingAndGlyphs" stroke="#000" stroke-width="0.3" opacity="0.8">0</text>
<text x="383.3" y="98.7" font-size="8.8" fill="#000" textLength="3.6" lengthAdjust="spacingAndGlyphs" stroke="#000" stroke-width="0.3" opacity="0.8">0</text>
<text x="397.3" y="98.7" font-size="8.8" fill="#000" textLength="3.6" lengthAdjust="spacingAndGlyphs" stroke="#000" stroke-width="0.3" opacity="0.8">0</text>
<text x="405.2" y="98.7" font-size="8.8" fill="#000" textLength="3.6" lengthAdjust="spacingAndGlyphs" stroke="#000" stroke-width="0.3" opacity="0.8">0</text>
<text x="413.1" y="98.7" font-size="8.8" fill="#000" textLength="3.6" lengthAdjust="spacingAndGlyphs" stroke="#000" stroke-width="0.3" opacity="0.8">0</text>
<text x="427.1" y="98.7" font-size="8.8" fill="#000" textLength="3.6" lengthAdjust="spacingAndGlyphs" stroke="#000" stroke-width="0.3" opacity="0.8">0</text>
<text x="435.0" y="98.7" font-size="8.8" fill="#000" textLength="3.6" lengthAdjust="spacingAndGlyphs" stroke="#000" stroke-width="0.3" opacity="0.8">0</text>
<text x="442.9" y="98.7" font-size="8.8" fill="#000" textLength="3.6" lengthAdjust="spacingAndGlyphs" stroke="#000" stroke-width="0.3" opacity="0.8">0</text>
<text x="456.9" y="98.7" font-size="8.8" fill="#000" textLength="3.6" lengthAdjust="spacingAndGlyphs" stroke="#000" stroke-width="0.3" opacity="0.8">0</text>
<text x="464.8" y="98.7" font-size="8.8" fill="#000" textLength="3.6" lengthAdjust="spacingAndGlyphs" stroke="#000" stroke-width="0.3" opacity="0.8">0</text>
<text x="472.7" y="98.7" font-size="8.8" fill="#000" textLength="3.6" lengthAdjust="spacingAndGlyphs" stroke="#000" stroke-width="0.3" opacity="0.8">0</text>
<text x="486.7" y="98.7" font-size="8.8" fill="#000" textLength="3.6" lengthAdjust="spacingAndGlyphs" stroke="#000" stroke-width="0.3" opacity="0.8">0</text>
<text x="494.6" y="98.7" font-size="8.8" fill="#000" textLength="3.6" lengthAdjust="spacingAndGlyphs" stroke="#000" stroke-width="0.3" opacity="0.8">0</text>
<text x="502.5" y="98.7" font-size="8.8" fill="#000" textLength="3.6" lengthAdjust="spacingAndGlyphs" stroke="#000" stroke-width="0.3" opacity="0.8">0</text>
<text x="516.5" y="98.7" font-size="8.8" fill="#000" textLength="3.6" lengthAdjust="spacingAndGlyphs" stroke="#000" stroke-width="0.3" opacity="0.8">0</text>
<text x="524.4" y="98.7" font-size="8.8" fill="#000" textLength="3.6" lengthAdjust="spacingAndGlyphs" stroke="#000" stroke-width="0.3" opacity="0.8">0</text>
<text x="532.3" y="98.7" font-size="8.8" fill="#000" textLength="3.6" lengthAdjust="spacingAndGlyphs" stroke="#000" stroke-width="0.3" opacity="0.8">0</text>
<text x="546.3" y="98.7" font-size="8.8" fill="#000" textLength="3.6" lengthAdjust="spacingAndGlyphs" stroke="#000" stroke-width="0.3" opacity="0.8">0</text>
<text x="554.2" y="98.7" font-size="8.8" fill="#000" textLength="3.6" lengthAdjust="spacingAndGlyphs" stroke="#000" stroke-width="0.3" opacity="0.8">0</text>
<text x="562.1" y="98.7" font-size="8.8" fill="#000" textLength="3.6" lengthAdjust="spacingAndGlyphs" stroke="#000" stroke-width="0.3" opacity="0.8">0</text>
<text x="39.7" y="114.2" font-size="8.8" fill="#000" textLength="3.6" lengthAdjust="spacingAndGlyphs" stroke="#000" stroke-width="0.3" opacity="0.8">0</text>
<text x="47.6" y="114.2" font-size="8.8" fill="#000" textLength="3.6" lengthAdjust="spacingAndGlyphs" stroke="#000" stroke-width="0.3" opacity="0.8">0</text>
<text x="55.5" y="114.2" font-size="8.8" fill="#000" textLength="3.6" lengthAdjust="spacingAndGlyphs" stroke="#000" stroke-width="0.3" opacity="0.8">0</text>
<text x="69.5" y="114.2" font-size="8.8" fill="#000" textLength="3.6" lengthAdjust="spacingAndGlyphs" stroke="#000" stroke-width="0.3" opacity="0.8">0</text>
<text x="77.4" y="114.2" font-size="8.8" fill="#000" textLength="3.6" lengthAdjust="spacingAndGlyphs" stroke="#000" stroke-width="0.3" opacity="0.8">0</text>
<text x="85.3" y="114.2" font-size="8.8" fill="#000" textLength="3.6" lengthAdjust="spacingAndGlyphs" stroke="#000" stroke-width="0.3" opacity="0.8">0</text>
<text x="99.3" y="114.2" font-size="8.8" fill="#000" textLength="3.6" lengthAdjust="spacingAndGlyphs" stroke="#000" stroke-width="0.3" opacity="0.8">0</text>
<text x="107.2" y="114.2" font-size="8.8" fill="#000" textLength="3.6" lengthAdjust="spacingAndGlyphs" stroke="#000" stroke-width="0.3" opacity="0.8">0</text>
<text x="115.1" y="114.2" font-size="8.8" fill="#000" textLength="3.6" lengthAdjust="spacingAndGlyphs" stroke="#000" stroke-width="0.3" opacity="0.8">0</text>
<text x="129.1" y="114.2" font-size="8.8" fill="#000" textLength="3.6" lengthAdjust="spacingAndGlyphs" stroke="#000" stroke-width="0.3" opacity="0.8">0</text>
<text x="137.0" y="114.2" font-size="8.8" fill="#000" textLength="3.6" lengthAdjust="spacingAndGlyphs" stroke="#000" stroke-width="0.3" opacity="0.8">0</text>
<text x="144.9" y="114.2" font-size="8.8" fill="#000" textLength="3.6" lengthAdjust="spacingAndGlyphs" stroke="#000" stroke-width="0.3" opacity="0.8">0</text>
<text x="158.9" y="114.2" font-size="8.8" fill="#000" textLength="3.6" lengthAdjust="spacingAndGlyphs" stroke="#000" stroke-width="0.3" opacity="0.8">0</text>
<text x="166.8" y="114.2" font-size="8.8" fill="#000" textLength="3.6" lengthAdjust="spacingAndGlyphs" stroke="#000" stroke-width="0.3" opacity="0.8">0</text>
<text x="174.7" y="114.2" font-size="8.8" fill="#000" textLength="3.6" lengthAdjust="spacingAndGlyphs" stroke="#000" stroke-width="0.3" opacity="0.8">0</text>
<text x="188.7" y="114.2" font-size="8.8" fill="#000" textLength="3.6" lengthAdjust="spacingAndGlyphs" stroke="#000" stroke-width="0.3" opacity="0.8">0</text>
<text x="196.6" y="114.2" font-size="8.8" fill="#000" textLength="3.6" lengthAdjust="spacingAndGlyphs" stroke="#000" stroke-width="0.3" opacity="0.8">0</text>
<text x="204.5" y="114.2" font-size="8.8" fill="#000" textLength="3.6" lengthAdjust="spacingAndGlyphs" stroke="#000" stroke-width="0.3" opacity="0.8">0</text>
<text x="218.5" y="114.2" font-size="8.8" fill="#000" textLength="3.6" lengthAdjust="spacingAndGlyphs" stroke="#000" stroke-width="0.3" opacity="0.8">0</text>
<text x="226.4" y="114.2" font-size="8.8" fill="#000" textLength="3.6" lengthAdjust="spacingAndGlyphs" stroke="#000" stroke-width="0.3" opacity="0.8">0</text>
<text x="234.3" y="114.2" font-size="8.8" fill="#000" textLength="3.6" lengthAdjust="spacingAndGlyphs" stroke="#000" stroke-width="0.3" opacity="0.8">0</text>
<text x="248.3" y="114.2" font-size="8.8" fill="#000" textLength="3.6" lengthAdjust="spacingAndGlyphs" stroke="#000" stroke-width="0.3" opacity="0.8">0</text>
<text x="256.2" y="114.2" font-size="8.8" fill="#000" textLength="3.6" lengthAdjust="spacingAndGlyphs" stroke="#000" stroke-width="0.3" opacity="0.8">0</text>
<text x="264.1" y="114.2" font-size="8.8" fill="#000" textLength="3.6" lengthAdjust="spacingAndGlyphs" stroke="#000" stroke-width="0.3" opacity="0.8">0</text>
<text x="278.1" y="114.2" font-size="8.8" fill="#000" textLength="3.6" lengthAdjust="spacingAndGlyphs" stroke="#000" stroke-width="0.3" opacity="0.8">0</text>
<text x="286.0" y="114.2" font-size="8.8" fill="#000" textLength="3.6" lengthAdjust="spacingAndGlyphs" stroke="#000" stroke-width="0.3" opacity="0.8">0</text>
<text x="293.9" y="114.2" font-size="8.8" fill="#000" textLength="3.6" lengthAdjust="spacingAndGlyphs" stroke="#000" stroke-width="0.3" opacity="0.8">0</text>
<text x="307.9" y="114.2" font-size="8.8" fill="#000" textLength="3.6" lengthAdjust="spacingAndGlyphs" stroke="#000" stroke-width="0.3" opacity="0.8">0</text>
<text x="315.8" y="114.2" font-size="8.8" fill="#000" textLength="3.6" lengthAdjust="spacingAndGlyphs" stroke="#000" stroke-width="0.3" opacity="0.8">0</text>
<text x="323.7" y="114.2" font-size="8.8" fill="#000" textLength="3.6" lengthAdjust="spacingAndGlyphs" stroke="#000" stroke-width="0.3" opacity="0.8">0</text>
<text x="337.7" y="114.2" font-size="8.8" fill="#000" textLength="3.6" lengthAdjust="spacingAndGlyphs" stroke="#000" stroke-width="0.3" opacity="0.8">0</text>
<text x="345.6" y="114.2" font-size="8.8" fill="#000" textLength="3.6" lengthAdjust="spacingAndGlyphs" stroke="#000" stroke-width="0.3" opacity="0.8">0</text>
<text x="353.5" y="114.2" font-size="8.8" fill="#000" textLength="3.6" lengthAdjust="spacingAndGlyphs" stroke="#000" stroke-width="0.3" opacity="0.8">0</text>
<text x="367.5" y="114.2" font-size="8.8" fill="#000" textLength="3.6" lengthAdjust="spacingAndGlyphs" stroke="#000" stroke-width="0.3" opacity="0.8">0</text>
<text x="375.4" y="114.2" font-size="8.8" fill="#000" textLength="3.6" lengthAdjust="spacingAndGlyphs" stroke="#000" stroke-width="0.3" opacity="0.8">0</text>
<text x="383.3" y="114.2" font-size="8.8" fill="#000" textLength="3.6" lengthAdjust="spacingAndGlyphs" stroke="#000" stroke-width="0.3" opacity="0.8">0</text>
<text x="397.3" y="114.2" font-size="8.8" fill="#000" textLength="3.6" lengthAdjust="spacingAndGlyphs" stroke="#000" stroke-width="0.3" opacity="0.8">0</text>
<text x="405.2" y="114.2" font-size="8.8" fill="#000" textLength="3.6" lengthAdjust="spacingAndGlyphs" stroke="#000" stroke-width="0.3" opacity="0.8">0</text>
<text x="413.1" y="114.2" font-size="8.8" fill="#000" textLength="3.6" lengthAdjust="spacingAndGlyphs" stroke="#000" stroke-width="0.3" opacity="0.8">0</text>
<text x="427.1" y="114.2" font-size="8.8" fill="#000" textLength="3.6" lengthAdjust="spacingAndGlyphs" stroke="#000" stroke-width="0.3" opacity="0.8">0</text>
<text x="435.0" y="114.2" font-size="8.8" fill="#000" textLength="3.6" lengthAdjust="spacingAndGlyphs" stroke="#000" stroke-width="0.3" opacity="0.8">0</text>
<text x="442.9" y="114.2" font-size="8.8" fill="#000" textLength="3.6" lengthAdjust="spacingAndGlyphs" stroke="#000" stroke-width="0.3" opacity="0.8">0</text>
<text x="456.9" y="114.2" font-size="8.8" fill="#000" textLength="3.6" lengthAdjust="spacingAndGlyphs" stroke="#000" stroke-width="0.3" opacity="0.8">0</text>
<text x="464.8" y="114.2" font-size="8.8" fill="#000" textLength="3.6" lengthAdjust="spacingAndGlyphs" stroke="#000" stroke-width="0.3" opacity="0.8">0</text>
<text x="472.7" y="114.2" font-size="8.8" fill="#000" textLength="3.6" lengthAdjust="spacingAndGlyphs" stroke="#000" stroke-width="0.3" opacity="0.8">0</text>
<text x="486.7" y="114.2" font-size="8.8" fill="#000" textLength="3.6" lengthAdjust="spacingAndGlyphs" stroke="#000" stroke-width="0.3" opacity="0.8">0</text>
<text x="494.6" y="114.2" font-size="8.8" fill="#000" textLength="3.6" lengthAdjust="spacingAndGlyphs" stroke="#000" stroke-width="0.3" opacity="0.8">0</text>
<text x="502.5" y="114.2" font-size="8.8" fill="#000" textLength="3.6" lengthAdjust="spacingAndGlyphs" stroke="#000" stroke-width="0.3" opacity="0.8">0</text>
<text x="516.5" y="114.2" font-size="8.8" fill="#000" textLength="3.6" lengthAdjust="spacingAndGlyphs" stroke="#000" stroke-width="0.3" opacity="0.8">0</text>
<text x="524.4" y="114.2" font-size="8.8" fill="#000" textLength="3.6" lengthAdjust="spacingAndGlyphs" stroke="#000" stroke-width="0.3" opacity="0.8">0</text>
<text x="532.3" y="114.2" font-size="8.8" fill="#000" textLength="3.6" lengthAdjust="spacingAndGlyphs" stroke="#000" stroke-width="0.3" opacity="0.8">0</text>
<text x="546.3" y="114.2" font-size="8.8" fill="#000" textLength="3.6" lengthAdjust="spacingAndGlyphs" stroke="#000" stroke-width="0.3" opacity="0.8">0</text>
<text x="554.2" y="114.2" font-size="8.8" fill="#000" textLength="3.6" lengthAdjust="spacingAndGlyphs" stroke="#000" stroke-width="0.3" opacity="0.8">0</text>
<text x="562.1" y="114.2" font-size="8.8" fill="#000" textLength="3.6" lengthAdjust="spacingAndGlyphs" stroke="#000" stroke-width="0.3" opacity="0.8">0</text>
<text x="39.7" y="129.7" font-size="8.8" fill="#000" textLength="3.6" lengthAdjust="spacingAndGlyphs" stroke="#000" stroke-width="0.3" opacity="0.8">0</text>
<text x="47.6" y="129.7" font-size="8.8" fill="#000" textLength="3.6" lengthAdjust="spacingAndGlyphs" stroke="#000" stroke-width="0.3" opacity="0.8">0</text>
<text x="55.5" y="129.7" font-size="8.8" fill="#000" textLength="3.6" lengthAdjust="spacingAndGlyphs" stroke="#000" stroke-width="0.3" opacity="0.8">0</text>
<text x="69.5" y="129.7" font-size="8.8" fill="#000" textLength="3.6" lengthAdjust="spacingAndGlyphs" stroke="#000" stroke-width="0.3" opacity="0.8">0</text>
<text x="77.4" y="129.7" font-size="8.8" fill="#000" textLength="3.6" lengthAdjust="spacingAndGlyphs" stroke="#000" stroke-width="0.3" opacity="0.8">0</text>
<text x="85.3" y="129.7" font-size="8.8" fill="#000" textLength="3.6" lengthAdjust="spacingAndGlyphs" stroke="#000" stroke-width="0.3" opacity="0.8">0</text>
<text x="99.3" y="129.7" font-size="8.8" fill="#000" textLength="3.6" lengthAdjust="spacingAndGlyphs" stroke="#000" stroke-width="0.3" opacity="0.8">0</text>
<text x="107.2" y="129.7" font-size="8.8" fill="#000" textLength="3.6" lengthAdjust="spacingAndGlyphs" stroke="#000" stroke-width="0.3" opacity="0.8">0</text>
<text x="115.1" y="129.7" font-size="8.8" fill="#000" textLength="3.6" lengthAdjust="spacingAndGlyphs" stroke="#000" stroke-width="0.3" opacity="0.8">0</text>
<text x="129.1" y="129.7" font-size="8.8" fill="#000" textLength="3.6" lengthAdjust="spacingAndGlyphs" stroke="#000" stroke-width="0.3" opacity="0.8">0</text>
<text x="137.0" y="129.7" font-size="8.8" fill="#000" textLength="3.6" lengthAdjust="spacingAndGlyphs" stroke="#000" stroke-width="0.3" opacity="0.8">0</text>
<text x="144.9" y="129.7" font-size="8.8" fill="#000" textLength="3.6" lengthAdjust="spacingAndGlyphs" stroke="#000" stroke-width="0.3" opacity="0.8">0</text>
<text x="158.9" y="129.7" font-size="8.8" fill="#000" textLength="3.6" lengthAdjust="spacingAndGlyphs" stroke="#000" stroke-width="0.3" opacity="0.8">0</text>
<text x="166.8" y="129.7" font-size="8.8" fill="#000" textLength="3.6" lengthAdjust="spacingAndGlyphs" stroke="#000" stroke-width="0.3" opacity="0.8">0</text>
<text x="174.7" y="129.7" font-size="8.8" fill="#000" textLength="3.6" lengthAdjust="spacingAndGlyphs" stroke="#000" stroke-width="0.3" opacity="0.8">0</text>
<text x="188.7" y="129.7" font-size="8.8" fill="#000" textLength="3.6" lengthAdjust="spacingAndGlyphs" stroke="#000" stroke-width="0.3" opacity="0.8">0</text>
<text x="196.6" y="129.7" font-size="8.8" fill="#000" textLength="3.6" lengthAdjust="spacingAndGlyphs" stroke="#000" stroke-width="0.3" opacity="0.8">0</text>
<text x="204.5" y="129.7" font-size="8.8" fill="#000" textLength="3.6" lengthAdjust="spacingAndGlyphs" stroke="#000" stroke-width="0.3" opacity="0.8">0</text>
<text x="218.5" y="129.7" font-size="8.8" fill="#000" textLength="3.6" lengthAdjust="spacingAndGlyphs" stroke="#000" stroke-width="0.3" opacity="0.8">0</text>
<text x="226.4" y="129.7" font-size="8.8" fill="#000" textLength="3.6" lengthAdjust="spacingAndGlyphs" stroke="#000" stroke-width="0.3" opacity="0.8">0</text>
<text x="234.3" y="129.7" font-size="8.8" fill="#000" textLength="3.6" lengthAdjust="spacingAndGlyphs" stroke="#000" stroke-width="0.3" opacity="0.8">0</text>
<text x="248.3" y="129.7" font-size="8.8" fill="#000" textLength="3.6" lengthAdjust="spacingAndGlyphs" stroke="#000" stroke-width="0.3" opacity="0.8">0</text>
<text x="256.2" y="129.7" font-size="8.8" fill="#000" textLength="3.6" lengthAdjust="spacingAndGlyphs" stroke="#000" stroke-width="0.3" opacity="0.8">0</text>
<text x="264.1" y="129.7" font-size="8.8" fill="#000" textLength="3.6" lengthAdjust="spacingAndGlyphs" stroke="#000" stroke-width="0.3" opacity="0.8">0</text>
<text x="278.1" y="129.7" font-size="8.8" fill="#000" textLength="3.6" lengthAdjust="spacingAndGlyphs" stroke="#000" stroke-width="0.3" opacity="0.8">0</text>
<text x="286.0" y="129.7" font-size="8.8" fill="#000" textLength="3.6" lengthAdjust="spacingAndGlyphs" stroke="#000" stroke-width="0.3" opacity="0.8">0</text>
<text x="293.9" y="129.7" font-size="8.8" fill="#000" textLength="3.6" lengthAdjust="spacingAndGlyphs" stroke="#000" stroke-width="0.3" opacity="0.8">0</text>
<text x="307.9" y="129.7" font-size="8.8" fill="#000" textLength="3.6" lengthAdjust="spacingAndGlyphs" stroke="#000" stroke-width="0.3" opacity="0.8">0</text>
<text x="315.8" y="129.7" font-size="8.8" fill="#000" textLength="3.6" lengthAdjust="spacingAndGlyphs" stroke="#000" stroke-width="0.3" opacity="0.8">0</text>
<text x="323.7" y="129.7" font-size="8.8" fill="#000" textLength="3.6" lengthAdjust="spacingAndGlyphs" stroke="#000" stroke-width="0.3" opacity="0.8">0</text>
<text x="337.7" y="129.7" font-size="8.8" fill="#000" textLength="3.6" lengthAdjust="spacingAndGlyphs" stroke="#000" stroke-width="0.3" opacity="0.8">0</text>
<text x="345.6" y="129.7" font-size="8.8" fill="#000" textLength="3.6" lengthAdjust="spacingAndGlyphs" stroke="#000" stroke-width="0.3" opacity="0.8">0</text>
<text x="353.5" y="129.7" font-size="8.8" fill="#000" textLength="3.6" lengthAdjust="spacingAndGlyphs" stroke="#000" stroke-width="0.3" opacity="0.8">0</text>
<text x="367.5" y="129.7" font-size="8.8" fill="#000" textLength="3.6" lengthAdjust="spacingAndGlyphs" stroke="#000" stroke-width="0.3" opacity="0.8">0</text>
<text x="375.4" y="129.7" font-size="8.8" fill="#000" textLength="3.6" lengthAdjust="spacingAndGlyphs" stroke="#000" stroke-width="0.3" opacity="0.8">0</text>
<text x="383.3" y="129.7" font-size="8.8" fill="#000" textLength="3.6" lengthAdjust="spacingAndGlyphs" stroke="#000" stroke-width="0.3" opacity="0.8">0</text>
<text x="397.3" y="129.7" font-size="8.8" fill="#000" textLength="3.6" lengthAdjust="spacingAndGlyphs" stroke="#000" stroke-width="0.3" opacity="0.8">0</text>
<text x="405.2" y="129.7" font-size="8.8" fill="#000" textLength="3.6" lengthAdjust="spacingAndGlyphs" stroke="#000" stroke-width="0.3" opacity="0.8">0</text>
<text x="413.1" y="129.7" font-size="8.8" fill="#000" textLength="3.6" lengthAdjust="spacingAndGlyphs" stroke="#000" stroke-width="0.3" opacity="0.8">0</text>
<text x="427.1" y="129.7" font-size="8.8" fill="#000" textLength="3.6" lengthAdjust="spacingAndGlyphs" stroke="#000" stroke-width="0.3" opacity="0.8">0</text>
<text x="435.0" y="129.7" font-size="8.8" fill="#000" textLength="3.6" lengthAdjust="spacingAndGlyphs" stroke="#000" stroke-width="0.3" opacity="0.8">0</text>
<text x="442.9" y="129.7" font-size="8.8" fill="#000" textLength="3.6" lengthAdjust="spacingAndGlyphs" stroke="#000" stroke-width="0.3" opacity="0.8">0</text>
<text x="456.9" y="129.7" font-size="8.8" fill="#000" textLength="3.6" lengthAdjust="spacingAndGlyphs" stroke="#000" stroke-width="0.3" opacity="0.8">0</text>
<text x="464.8" y="129.7" font-size="8.8" fill="#000" textLength="3.6" lengthAdjust="spacingAndGlyphs" stroke="#000" stroke-width="0.3" opacity="0.8">0</text>
<text x="472.7" y="129.7" font-size="8.8" fill="#000" textLength="3.6" lengthAdjust="spacingAndGlyphs" stroke="#000" stroke-width="0.3" opacity="0.8">0</text>
<text x="486.7" y="129.7" font-size="8.8" fill="#000" textLength="3.6" lengthAdjust="spacingAndGlyphs" stroke="#000" stroke-width="0.3" opacity="0.8">0</text>
<text x="494.6" y="129.7" font-size="8.8" fill="#000" textLength="3.6" lengthAdjust="spacingAndGlyphs" stroke="#000" stroke-width="0.3" opacity="0.8">0</text>
<text x="502.5" y="129.7" font-size="8.8" fill="#000" textLength="3.6" lengthAdjust="spacingAndGlyphs" stroke="#000" stroke-width="0.3" opacity="0.8">0</text>
<text x="516.5" y="129.7" font-size="8.8" fill="#000" textLength="3.6" lengthAdjust="spacingAndGlyphs" stroke="#000" stroke-width="0.3" opacity="0.8">0</text>
<text x="524.4" y="129.7" font-size="8.8" fill="#000" textLength="3.6" lengthAdjust="spacingAndGlyphs" stroke="#000" stroke-width="0.3" opacity="0.8">0</text>
<text x="532.3" y="129.7" font-size="8.8" fill="#000" textLength="3.6" lengthAdjust="spacingAndGlyphs" stroke="#000" stroke-width="0.3" opacity="0.8">0</text>
<text x="546.3" y="129.7" font-size="8.8" fill="#000" textLength="3.6" lengthAdjust="spacingAndGlyphs" stroke="#000" stroke-width="0.3" opacity="0.8">0</text>
<text x="554.2" y="129.7" font-size="8.8" fill="#000" textLength="3.6" lengthAdjust="spacingAndGlyphs" stroke="#000" stroke-width="0.3" opacity="0.8">0</text>
<text x="562.1" y="129.7" font-size="8.8" fill="#000" textLength="3.6" lengthAdjust="spacingAndGlyphs" stroke="#000" stroke-width="0.3" opacity="0.8">0</text>
<text x="39.7" y="145.2" font-size="8.8" fill="#000" textLength="3.6" lengthAdjust="spacingAndGlyphs" stroke="#000" stroke-width="0.3" opacity="0.8">0</text>
<text x="47.6" y="145.2" font-size="8.8" fill="#000" textLength="3.6" lengthAdjust="spacingAndGlyphs" stroke="#000" stroke-width="0.3" opacity="0.8">0</text>
<text x="55.5" y="145.2" font-size="8.8" fill="#000" textLength="3.6" lengthAdjust="spacingAndGlyphs" stroke="#000" stroke-width="0.3" opacity="0.8">0</text>
<text x="69.5" y="145.2" font-size="8.8" fill="#000" textLength="3.6" lengthAdjust="spacingAndGlyphs" stroke="#000" stroke-width="0.3" opacity="0.8">0</text>
<text x="77.4" y="145.2" font-size="8.8" fill="#000" textLength="3.6" lengthAdjust="spacingAndGlyphs" stroke="#000" stroke-width="0.3" opacity="0.8">0</text>
<text x="85.3" y="145.2" font-size="8.8" fill="#000" textLength="3.6" lengthAdjust="spacingAndGlyphs" stroke="#000" stroke-width="0.3" opacity="0.8">0</text>
<text x="99.3" y="145.2" font-size="8.8" fill="#000" textLength="3.6" lengthAdjust="spacingAndGlyphs" stroke="#000" stroke-width="0.3" opacity="0.8">0</text>
<text x="107.2" y="145.2" font-size="8.8" fill="#000" textLength="3.6" lengthAdjust="spacingAndGlyphs" stroke="#000" stroke-width="0.3" opacity="0.8">0</text>
<text x="115.1" y="145.2" font-size="8.8" fill="#000" textLength="3.6" lengthAdjust="spacingAndGlyphs" stroke="#000" stroke-width="0.3" opacity="0.8">0</text>
<text x="129.1" y="145.2" font-size="8.8" fill="#000" textLength="3.6" lengthAdjust="spacingAndGlyphs" stroke="#000" stroke-width="0.3" opacity="0.8">0</text>
<text x="137.0" y="145.2" font-size="8.8" fill="#000" textLength="3.6" lengthAdjust="spacingAndGlyphs" stroke="#000" stroke-width="0.3" opacity="0.8">0</text>
<text x="144.9" y="145.2" font-size="8.8" fill="#000" textLength="3.6" lengthAdjust="spacingAndGlyphs" stroke="#000" stroke-width="0.3" opacity="0.8">0</text>
<text x="158.9" y="145.2" font-size="8.8" fill="#000" textLength="3.6" lengthAdjust="spacingAndGlyphs" stroke="#000" stroke-width="0.3" opacity="0.8">0</text>
<text x="166.8" y="145.2" font-size="8.8" fill="#000" textLength="3.6" lengthAdjust="spacingAndGlyphs" stroke="#000" stroke-width="0.3" opacity="0.8">0</text>
<text x="174.7" y="145.2" font-size="8.8" fill="#000" textLength="3.6" lengthAdjust="spacingAndGlyphs" stroke="#000" stroke-width="0.3" opacity="0.8">0</text>
<text x="188.7" y="145.2" font-size="8.8" fill="#000" textLength="3.6" lengthAdjust="spacingAndGlyphs" stroke="#000" stroke-width="0.3" opacity="0.8">0</text>
<text x="196.6" y="145.2" font-size="8.8" fill="#000" textLength="3.6" lengthAdjust="spacingAndGlyphs" stroke="#000" stroke-width="0.3" opacity="0.8">0</text>
<text x="204.5" y="145.2" font-size="8.8" fill="#000" textLength="3.6" lengthAdjust="spacingAndGlyphs" stroke="#000" stroke-width="0.3" opacity="0.8">0</text>
<text x="218.5" y="145.2" font-size="8.8" fill="#000" textLength="3.6" lengthAdjust="spacingAndGlyphs" stroke="#000" stroke-width="0.3" opacity="0.8">0</text>
<text x="226.4" y="145.2" font-size="8.8" fill="#000" textLength="3.6" lengthAdjust="spacingAndGlyphs" stroke="#000" stroke-width="0.3" opacity="0.8">0</text>
<text x="234.3" y="145.2" font-size="8.8" fill="#000" textLength="3.6" lengthAdjust="spacingAndGlyphs" stroke="#000" stroke-width="0.3" opacity="0.8">0</text>
<text x="248.3" y="145.2" font-size="8.8" fill="#000" textLength="3.6" lengthAdjust="spacingAndGlyphs" stroke="#000" stroke-width="0.3" opacity="0.8">0</text>
<text x="256.2" y="145.2" font-size="8.8" fill="#000" textLength="3.6" lengthAdjust="spacingAndGlyphs" stroke="#000" stroke-width="0.3" opacity="0.8">0</text>
<text x="264.1" y="145.2" font-size="8.8" fill="#000" textLength="3.6" lengthAdjust="spacingAndGlyphs" stroke="#000" stroke-width="0.3" opacity="0.8">0</text>
<text x="278.1" y="145.2" font-size="8.8" fill="#000" textLength="3.6" lengthAdjust="spacingAndGlyphs" stroke="#000" stroke-width="0.3" opacity="0.8">0</text>
<text x="286.0" y="145.2" font-size="8.8" fill="#000" textLength="3.6" lengthAdjust="spacingAndGlyphs" stroke="#000" stroke-width="0.3" opacity="0.8">0</text>
<text x="293.9" y="145.2" font-size="8.8" fill="#000" textLength="3.6" lengthAdjust="spacingAndGlyphs" stroke="#000" stroke-width="0.3" opacity="0.8">0</text>
<text x="307.9" y="145.2" font-size="8.8" fill="#000" textLength="3.6" lengthAdjust="spacingAndGlyphs" stroke="#000" stroke-width="0.3" opacity="0.8">0</text>
<text x="315.8" y="145.2" font-size="8.8" fill="#000" textLength="3.6" lengthAdjust="spacingAndGlyphs" stroke="#000" stroke-width="0.3" opacity="0.8">0</text>
<text x="323.7" y="145.2" font-size="8.8" fill="#000" textLength="3.6" lengthAdjust="spacingAndGlyphs" stroke="#000" stroke-width="0.3" opacity="0.8">0</text>
<text x="337.7" y="145.2" font-size="8.8" fill="#000" textLength="3.6" lengthAdjust="spacingAndGlyphs" stroke="#000" stroke-width="0.3" opacity="0.8">0</text>
<text x="345.6" y="145.2" font-size="8.8" fill="#000" textLength="3.6" lengthAdjust="spacingAndGlyphs" stroke="#000" stroke-width="0.3" opacity="0.8">0</text>
<text x="353.5" y="145.2" font-size="8.8" fill="#000" textLength="3.6" lengthAdjust="spacingAndGlyphs" stroke="#000" stroke-width="0.3" opacity="0.8">0</text>
<text x="367.5" y="145.2" font-size="8.8" fill="#000" textLength="3.6" lengthAdjust="spacingAndGlyphs" stroke="#000" stroke-width="0.3" opacity="0.8">0</text>
<text x="375.4" y="145.2" font-size="8.8" fill="#000" textLength="3.6" lengthAdjust="spacingAndGlyphs" stroke="#000" stroke-width="0.3" opacity="0.8">0</text>
<text x="383.3" y="145.2" font-size="8.8" fill="#000" textLength="3.6" lengthAdjust="spacingAndGlyphs" stroke="#000" stroke-width="0.3" opacity="0.8">0</text>
<text x="397.3" y="145.2" font-size="8.8" fill="#000" textLength="3.6" lengthAdjust="spacingAndGlyphs" stroke="#000" stroke-width="0.3" opacity="0.8">0</text>
<text x="405.2" y="145.2" font-size="8.8" fill="#000" textLength="3.6" lengthAdjust="spacingAndGlyphs" stroke="#000" stroke-width="0.3" opacity="0.8">0</text>
<text x="413.1" y="145.2" font-size="8.8" fill="#000" textLength="3.6" lengthAdjust="spacingAndGlyphs" stroke="#000" stroke-width="0.3" opacity="0.8">0</text>
<text x="427.1" y="145.2" font-size="8.8" fill="#000" textLength="3.6" lengthAdjust="spacingAndGlyphs" stroke="#000" stroke-width="0.3" opacity="0.8">0</text>
<text x="435.0" y="145.2" font-size="8.8" fill="#000" textLength="3.6" lengthAdjust="spacingAndGlyphs" stroke="#000" stroke-width="0.3" opacity="0.8">0</text>
<text x="442.9" y="145.2" font-size="8.8" fill="#000" textLength="3.6" lengthAdjust="spacingAndGlyphs" stroke="#000" stroke-width="0.3" opacity="0.8">0</text>
<text x="456.9" y="145.2" font-size="8.8" fill="#000" textLength="3.6" lengthAdjust="spacingAndGlyphs" stroke="#000" stroke-width="0.3" opacity="0.8">0</text>
<text x="464.8" y="145.2" font-size="8.8" fill="#000" textLength="3.6" lengthAdjust="spacingAndGlyphs" stroke="#000" stroke-width="0.3" opacity="0.8">0</text>
<text x="472.7" y="145.2" font-size="8.8" fill="#000" textLength="3.6" lengthAdjust="spacingAndGlyphs" stroke="#000" stroke-width="0.3" opacity="0.8">0</text>
<text x="486.7" y="145.2" font-size="8.8" fill="#000" textLength="3.6" lengthAdjust="spacingAndGlyphs" stroke="#000" stroke-width="0.3" opacity="0.8">0</text>
<text x="494.6" y="145.2" font-size="8.8" fill="#000" textLength="3.6" lengthAdjust="spacingAndGlyphs" stroke="#000" stroke-width="0.3" opacity="0.8">0</text>
<text x="502.5" y="145.2" font-size="8.8" fill="#000" textLength="3.6" lengthAdjust="spacingAndGlyphs" stroke="#000" stroke-width="0.3" opacity="0.8">0</text>
<text x="516.5" y="145.2" font-size="8.8" fill="#000" textLength="3.6" lengthAdjust="spacingAndGlyphs" stroke="#000" stroke-width="0.3" opacity="0.8">0</text>
<text x="524.4" y="145.2" font-size="8.8" fill="#000" textLength="3.6" lengthAdjust="spacingAndGlyphs" stroke="#000" stroke-width="0.3" opacity="0.8">0</text>
<text x="532.3" y="145.2" font-size="8.8" fill="#000" textLength="3.6" lengthAdjust="spacingAndGlyphs" stroke="#000" stroke-width="0.3" opacity="0.8">0</text>
<text x="546.3" y="145.2" font-size="8.8" fill="#000" textLength="3.6" lengthAdjust="spacingAndGlyphs" stroke="#000" stroke-width="0.3" opacity="0.8">0</text>
<text x="554.2" y="145.2" font-size="8.8" fill="#000" textLength="3.6" lengthAdjust="spacingAndGlyphs" stroke="#000" stroke-width="0.3" opacity="0.8">0</text>
<text x="562.1" y="145.2" font-size="8.8" fill="#000" textLength="3.6" lengthAdjust="spacingAndGlyphs" stroke="#000" stroke-width="0.3" opacity="0.8">0</text>
<text x="82.6" y="157.4" font-size="8.2" fill="#fff" textLength="46.5" lengthAdjust="spacingAndGlyphs" text-anchor="middle">Background:</text>
<text x="82.6" y="165.8" font-size="8.2" fill="#fff" textLength="26.4" lengthAdjust="spacingAndGlyphs" text-anchor="middle">95 0 3</text>
<text x="173.1" y="157.4" font-size="8.2" fill="#fff" textLength="46.5" lengthAdjust="spacingAndGlyphs" text-anchor="middle">Background:</text>
<text x="173.1" y="165.8" font-size="8.2" fill="#fff" textLength="39.6" lengthAdjust="spacingAndGlyphs" text-anchor="middle">124 13 64</text>
<text x="263.6" y="157.4" font-size="8.2" fill="#fff" textLength="46.5" lengthAdjust="spacingAndGlyphs" text-anchor="middle">Background:</text>
<text x="263.6" y="165.8" font-size="8.2" fill="#fff" textLength="39.6" lengthAdjust="spacingAndGlyphs" text-anchor="middle">161 0 111</text>
<text x="354.2" y="157.4" font-size="8.2" fill="#111" textLength="46.5" lengthAdjust="spacingAndGlyphs" text-anchor="middle">Background:</text>
<text x="354.2" y="165.8" font-size="8.2" fill="#111" textLength="44.0" lengthAdjust="spacingAndGlyphs" text-anchor="middle">176 65 150</text>
<text x="444.7" y="157.4" font-size="8.2" fill="#111" textLength="46.5" lengthAdjust="spacingAndGlyphs" text-anchor="middle">Background:</text>
<text x="444.7" y="165.8" font-size="8.2" fill="#111" textLength="48.4" lengthAdjust="spacingAndGlyphs" text-anchor="middle">187 109 181</text>
<text x="535.2" y="157.4" font-size="8.2" fill="#111" textLength="46.5" lengthAdjust="spacingAndGlyphs" text-anchor="middle">Background:</text>
<text x="535.2" y="165.8" font-size="8.2" fill="#111" textLength="48.4" lengthAdjust="spacingAndGlyphs" text-anchor="middle">196 150 206</text>
<text x="133.5" y="188.4" font-size="8.6" fill="#111" textLength="34.2" lengthAdjust="spacingAndGlyphs">Symbols:</text>
<text x="188.0" y="188.4" font-size="8.6" fill="#111" textLength="49.0" lengthAdjust="spacingAndGlyphs">Decimal text</text>
<text x="291.4" y="188.4" font-size="8.6" fill="#111" textLength="36.0" lengthAdjust="spacingAndGlyphs">Font Size:</text>
<text x="342.3" y="188.4" font-size="8.6" fill="#111" textLength="8.7" lengthAdjust="spacingAndGlyphs">13</text>
<path d="M269,183.4 L271,181.2 L273,183.4 Z M269,187 L271,189.2 L273,187 Z" fill="#222"/>
<path d="M364,183.4 L366,181.2 L368,183.4 Z M364,187 L366,189.2 L368,187 Z" fill="#222"/>
<text x="402.0" y="188.4" font-size="8.6" fill="#111" textLength="22.0" lengthAdjust="spacingAndGlyphs">Color</text>
<text x="446.5" y="188.4" font-size="8.6" fill="#111" textLength="37.0" lengthAdjust="spacingAndGlyphs">Grayscale</text>
<text x="49.6" y="226.0" font-size="8.8" font-weight="bold" stroke="#111" stroke-width="0.35" fill="#111" textLength="72.8" lengthAdjust="spacingAndGlyphs">Choose Hue</text>
<circle cx="175.4" cy="282.9" r="2.4" fill="#fff" stroke="#444" stroke-width="0.8"/>
<path d="M161,224.5 V228 M161,287.5 V291 M127.5,257.8 H131 M190.5,257.8 H194" stroke="#222" stroke-width="1"/>
<text x="155.9" y="223.8" font-size="8.5" fill="#111" textLength="9.5" lengthAdjust="spacingAndGlyphs">90</text>
<text x="113.2" y="262.0" font-size="8.5" fill="#111" textLength="13.6" lengthAdjust="spacingAndGlyphs">180</text>
<text x="194.5" y="262.0" font-size="8.5" fill="#111" textLength="4.7" lengthAdjust="spacingAndGlyphs">0</text>
<text x="153.7" y="298.4" font-size="8.5" fill="#111" textLength="14.0" lengthAdjust="spacingAndGlyphs">270</text>
<text x="218.4" y="227.4" font-size="8.5" fill="#111">h</text>
<text x="241.7" y="227.7" font-size="8.5" font-weight="bold" stroke="#111" stroke-width="0.35" fill="#111" textLength="16.0" lengthAdjust="spacingAndGlyphs">300</text>
<text x="282.0" y="227.5" font-size="8.5" fill="#111" textLength="14.0" lengthAdjust="spacingAndGlyphs">deg</text>
<text x="107.5" y="308.9" font-size="8.3" font-weight="bold" stroke="#111" stroke-width="0.35" fill="#111" textLength="120.5" lengthAdjust="spacingAndGlyphs">Lightness/Chroma Choices</text>
<path d="M59,309.6 V480.3 H294.4" fill="none" stroke="#222" stroke-width="1.1"/>
<path d="M59,309.6 H63" stroke="#222" stroke-width="1"/>
<path d="M59,323.9 H61.5" stroke="#222" stroke-width="1"/>
<path d="M59,338.2 H63" stroke="#222" stroke-width="1"/>
<path d="M59,352.6 H61.5" stroke="#222" stroke-width="1"/>
<path d="M59,366.9 H63" stroke="#222" stroke-width="1"/>
<path d="M59,381.2 H61.5" stroke="#222" stroke-width="1"/>
<path d="M59,395.5 H63" stroke="#222" stroke-width="1"/>
<path d="M59,409.8 H61.5" stroke="#222" stroke-width="1"/>
<path d="M59,424.2 H63" stroke="#222" stroke-width="1"/>
<path d="M59,438.5 H61.5" stroke="#222" stroke-width="1"/>
<path d="M59,452.8 H63" stroke="#222" stroke-width="1"/>
<path d="M76.8,480.3 V476.5" stroke="#222" stroke-width="1"/>
<path d="M92.3,480.3 V476.5" stroke="#222" stroke-width="1"/>
<path d="M107.9,480.3 V476.5" stroke="#222" stroke-width="1"/>
<path d="M123.4,480.3 V476.5" stroke="#222" stroke-width="1"/>
<path d="M138.9,480.3 V476.5" stroke="#222" stroke-width="1"/>
<path d="M154.4,480.3 V476.5" stroke="#222" stroke-width="1"/>
<path d="M170.0,480.3 V476.5" stroke="#222" stroke-width="1"/>
<path d="M185.5,480.3 V476.5" stroke="#222" stroke-width="1"/>
<path d="M201.0,480.3 V476.5" stroke="#222" stroke-width="1"/>
<path d="M216.6,480.3 V476.5" stroke="#222" stroke-width="1"/>
<path d="M232.1,480.3 V476.5" stroke="#222" stroke-width="1"/>
<path d="M247.6,480.3 V476.5" stroke="#222" stroke-width="1"/>
<path d="M263.2,480.3 V476.5" stroke="#222" stroke-width="1"/>
<path d="M278.7,480.3 V476.5" stroke="#222" stroke-width="1"/>
<path d="M294.2,480.3 V476.5" stroke="#222" stroke-width="1"/>
<text x="43.0" y="321.0" font-size="8.5" fill="#111">L*</text>
<text x="284.4" y="488.3" font-size="8.5" fill="#111">C*</text>
<text x="61.7" y="464.1" font-size="8.5" fill="#222" textLength="4.4" lengthAdjust="spacingAndGlyphs">0</text>
<text x="61.7" y="449.8" font-size="8.5" fill="#222" textLength="8.7" lengthAdjust="spacingAndGlyphs">10</text>
<text x="61.7" y="435.5" font-size="8.5" fill="#222" textLength="8.7" lengthAdjust="spacingAndGlyphs">20</text>
<text x="61.7" y="421.1" font-size="8.5" fill="#222" textLength="8.7" lengthAdjust="spacingAndGlyphs">30</text>
<text x="61.7" y="406.8" font-size="8.5" fill="#222" textLength="8.7" lengthAdjust="spacingAndGlyphs">40</text>
<text x="61.7" y="392.5" font-size="8.5" fill="#222" textLength="8.7" lengthAdjust="spacingAndGlyphs">50</text>
<text x="61.7" y="378.2" font-size="8.5" fill="#222" textLength="8.7" lengthAdjust="spacingAndGlyphs">60</text>
<text x="61.7" y="363.9" font-size="8.5" fill="#222" textLength="8.7" lengthAdjust="spacingAndGlyphs">70</text>
<text x="61.7" y="349.5" font-size="8.5" fill="#222" textLength="8.7" lengthAdjust="spacingAndGlyphs">80</text>
<text x="61.7" y="335.2" font-size="8.5" fill="#222" textLength="8.7" lengthAdjust="spacingAndGlyphs">90</text>
<text x="61.7" y="320.9" font-size="8.5" fill="#222" textLength="13.1" lengthAdjust="spacingAndGlyphs">100</text>
<text x="82.6" y="474.1" font-size="8.5" fill="#222" textLength="4.4" lengthAdjust="spacingAndGlyphs" text-anchor="middle">0</text>
<text x="101.2" y="474.1" font-size="8.5" fill="#222" textLength="8.7" lengthAdjust="spacingAndGlyphs" text-anchor="middle">12</text>
<text x="116.9" y="474.1" font-size="8.5" fill="#222" textLength="8.7" lengthAdjust="spacingAndGlyphs" text-anchor="middle">24</text>
<text x="132.6" y="474.1" font-size="8.5" fill="#222" textLength="8.7" lengthAdjust="spacingAndGlyphs" text-anchor="middle">36</text>
<text x="148.2" y="474.1" font-size="8.5" fill="#222" textLength="8.7" lengthAdjust="spacingAndGlyphs" text-anchor="middle">48</text>
<text x="163.9" y="474.1" font-size="8.5" fill="#222" textLength="8.7" lengthAdjust="spacingAndGlyphs" text-anchor="middle">60</text>
<text x="179.6" y="474.1" font-size="8.5" fill="#222" textLength="8.7" lengthAdjust="spacingAndGlyphs" text-anchor="middle">72</text>
<text x="195.3" y="474.1" font-size="8.5" fill="#222" textLength="8.7" lengthAdjust="spacingAndGlyphs" text-anchor="middle">84</text>
<text x="211.0" y="474.1" font-size="8.5" fill="#222" textLength="8.7" lengthAdjust="spacingAndGlyphs" text-anchor="middle">96</text>
<text x="226.6" y="474.1" font-size="8.5" fill="#222" textLength="13.1" lengthAdjust="spacingAndGlyphs" text-anchor="middle">108</text>
<text x="242.3" y="474.1" font-size="8.5" fill="#222" textLength="13.1" lengthAdjust="spacingAndGlyphs" text-anchor="middle">120</text>
<text x="258.0" y="474.1" font-size="8.5" fill="#222" textLength="13.1" lengthAdjust="spacingAndGlyphs" text-anchor="middle">132</text>
<text x="273.7" y="474.1" font-size="8.5" fill="#222" textLength="13.1" lengthAdjust="spacingAndGlyphs" text-anchor="middle">144</text>
<text x="289.4" y="474.1" font-size="8.5" fill="#222" textLength="13.1" lengthAdjust="spacingAndGlyphs" text-anchor="middle">156</text>
<path d="M286,454.3 L288,452.1 L290,454.3 Z M286,457.8 L288,460 L290,457.8 Z" fill="#222"/>
<text x="179.5" y="459.3" font-size="8.6" fill="#111" textLength="64.1" lengthAdjust="spacingAndGlyphs">Background L* =</text>
<text x="257.2" y="459.3" font-size="8.6" fill="#111" textLength="10.2" lengthAdjust="spacingAndGlyphs">65</text>
<path d="M317.2,226.2 H576.2 M317.2,245.5 H576.2" stroke="#b2b2b2" stroke-width="1"/>
<path d="M317.2,226.2 V268.8" stroke="#b2b2b2" stroke-width="1"/>
<path d="M340.8,226.2 V268.8" stroke="#b2b2b2" stroke-width="1"/>
<path d="M364.3,226.2 V268.8" stroke="#b2b2b2" stroke-width="1"/>
<path d="M387.9,226.2 V268.8" stroke="#b2b2b2" stroke-width="1"/>
<path d="M411.4,226.2 V268.8" stroke="#b2b2b2" stroke-width="1"/>
<path d="M434.9,226.2 V268.8" stroke="#b2b2b2" stroke-width="1"/>
<path d="M458.5,226.2 V268.8" stroke="#b2b2b2" stroke-width="1"/>
<path d="M482.0,226.2 V268.8" stroke="#b2b2b2" stroke-width="1"/>
<path d="M505.6,226.2 V268.8" stroke="#b2b2b2" stroke-width="1"/>
<path d="M529.1,226.2 V268.8" stroke="#b2b2b2" stroke-width="1"/>
<path d="M552.7,226.2 V268.8" stroke="#b2b2b2" stroke-width="1"/>
<path d="M576.2,226.2 V268.8" stroke="#b2b2b2" stroke-width="1"/>
<text x="398.4" y="240.2" font-size="8.6" fill="#bdbdbd" textLength="83.6" lengthAdjust="spacingAndGlyphs">Foreground history</text>
<text x="398.4" y="259.5" font-size="8.6" fill="#bdbdbd" textLength="83.6" lengthAdjust="spacingAndGlyphs">Background history</text>
<text x="320.5" y="283.5" font-size="9" fill="#fff" textLength="5.0" lengthAdjust="spacingAndGlyphs">0</text>
<text x="344.1" y="283.5" font-size="9" fill="#fff" textLength="10.0" lengthAdjust="spacingAndGlyphs">10</text>
<text x="367.6" y="283.5" font-size="9" fill="#fff" textLength="10.0" lengthAdjust="spacingAndGlyphs">20</text>
<text x="391.2" y="283.5" font-size="9" fill="#fff" textLength="10.0" lengthAdjust="spacingAndGlyphs">30</text>
<text x="414.7" y="283.5" font-size="9" fill="#fff" textLength="10.0" lengthAdjust="spacingAndGlyphs">40</text>
<text x="438.2" y="283.5" font-size="9" fill="#fff" textLength="10.0" lengthAdjust="spacingAndGlyphs">50</text>
<text x="461.8" y="283.5" font-size="9" fill="#111" textLength="10.0" lengthAdjust="spacingAndGlyphs">60</text>
<text x="485.3" y="283.5" font-size="9" fill="#111" textLength="10.0" lengthAdjust="spacingAndGlyphs">70</text>
<text x="508.9" y="283.5" font-size="9" fill="#111" textLength="10.0" lengthAdjust="spacingAndGlyphs">80</text>
<text x="532.4" y="283.5" font-size="9" fill="#111" textLength="10.0" lengthAdjust="spacingAndGlyphs">90</text>
<text x="556.0" y="283.5" font-size="9" fill="#111" textLength="15.0" lengthAdjust="spacingAndGlyphs">100</text>
<text x="374.8" y="308.9" font-size="8.3" font-weight="bold" stroke="#111" stroke-width="0.35" fill="#111" textLength="93.8" lengthAdjust="spacingAndGlyphs">Hue/Chroma Choices</text>
<text x="444.4" y="493.7" font-size="9.2" font-weight="bold" stroke="#111" stroke-width="0.35" fill="#111" textLength="99.7" lengthAdjust="spacingAndGlyphs">Choose by Lightness</text>
<circle cx="421.8" cy="372.6" r="6" fill="#848484" stroke="#c8c8c8" stroke-width="1.5"/></svg>
<svg class="a" style="left:0;top:0" width="618" height="550" viewBox="0 0 618 550">
<defs>
<filter id="rough" x="-10%" y="-30%" width="120%" height="160%">
<feTurbulence type="fractalNoise" baseFrequency="0.8" numOctaves="2" seed="5" result="n"/>
<feDisplacementMap in="SourceGraphic" in2="n" scale="3.5"/>
</filter>
<filter id="shadow" x="-10%" y="-30%" width="130%" height="160%">
<feDropShadow dx="1" dy="1.2" stdDeviation="0.7" flood-color="#000" flood-opacity="0.9"/>
</filter>
</defs>
<g filter="url(#rough)" fill="none" stroke="#fff" stroke-linecap="round">
<path d="M48,151.5 C60,143.5 104,142 121,148 C129,152 127,161 117,166 C100,173 60,174 45,168 C37,163 39,156 50,150.5" stroke-width="4.2"/>
<path d="M45,154 C62,146 102,145 120,151 C126,155 123,162 112,167 C95,171 62,171 47,166" stroke-width="2" opacity="0.85"/>
<path d="M236,216 C248,208 270,209 279,217 C284,223 276,232 262,236 C248,239 233,236 229,229 C226,223 230,218 238,214" stroke-width="4.2"/>
<path d="M240,215 C255,210 272,213 277,219 C279,226 270,233 256,235 C243,236 233,232 232,226" stroke-width="2" opacity="0.85"/>
<path d="M278,218 C280,216 282,214 284,213" stroke-width="2"/>
</g>
<g filter="url(#shadow)">
<path d="M129.8,360.6 C150,372 166,385 162.5,400 C158,418 135,424 112.8,431.8" fill="none" stroke="#fff" stroke-width="1.8"/>
<circle cx="129.8" cy="360.6" r="3" fill="#fff"/>
<rect x="110" y="429" width="5.5" height="5.5" fill="#fff" transform="rotate(-20 112.8 431.8)"/>
</g>
<g filter="url(#shadow)" fill="#fff" stroke="#fff" stroke-width="0.5" font-family="Liberation Sans">
<text x="55.1" y="193.1" font-size="15" textLength="58.3" lengthAdjust="spacingAndGlyphs">Start by</text>
<text x="52" y="209" font-size="15" textLength="64.3" lengthAdjust="spacingAndGlyphs">clicking</text>
<text x="67" y="226.5" font-size="15.5" textLength="32.8" lengthAdjust="spacingAndGlyphs">here</text>
<text x="291.8" y="229" font-size="16" textLength="191.5" lengthAdjust="spacingAndGlyphs">Increment in even steps</text>
<text x="167.4" y="398.4" font-size="15.5" textLength="210.6" lengthAdjust="spacingAndGlyphs">Spiral through color space</text>
<text x="90.7" y="449.2" font-size="15" textLength="144.5" lengthAdjust="spacingAndGlyphs">Click to set color</text>
</g>
</svg>

</body></html>
